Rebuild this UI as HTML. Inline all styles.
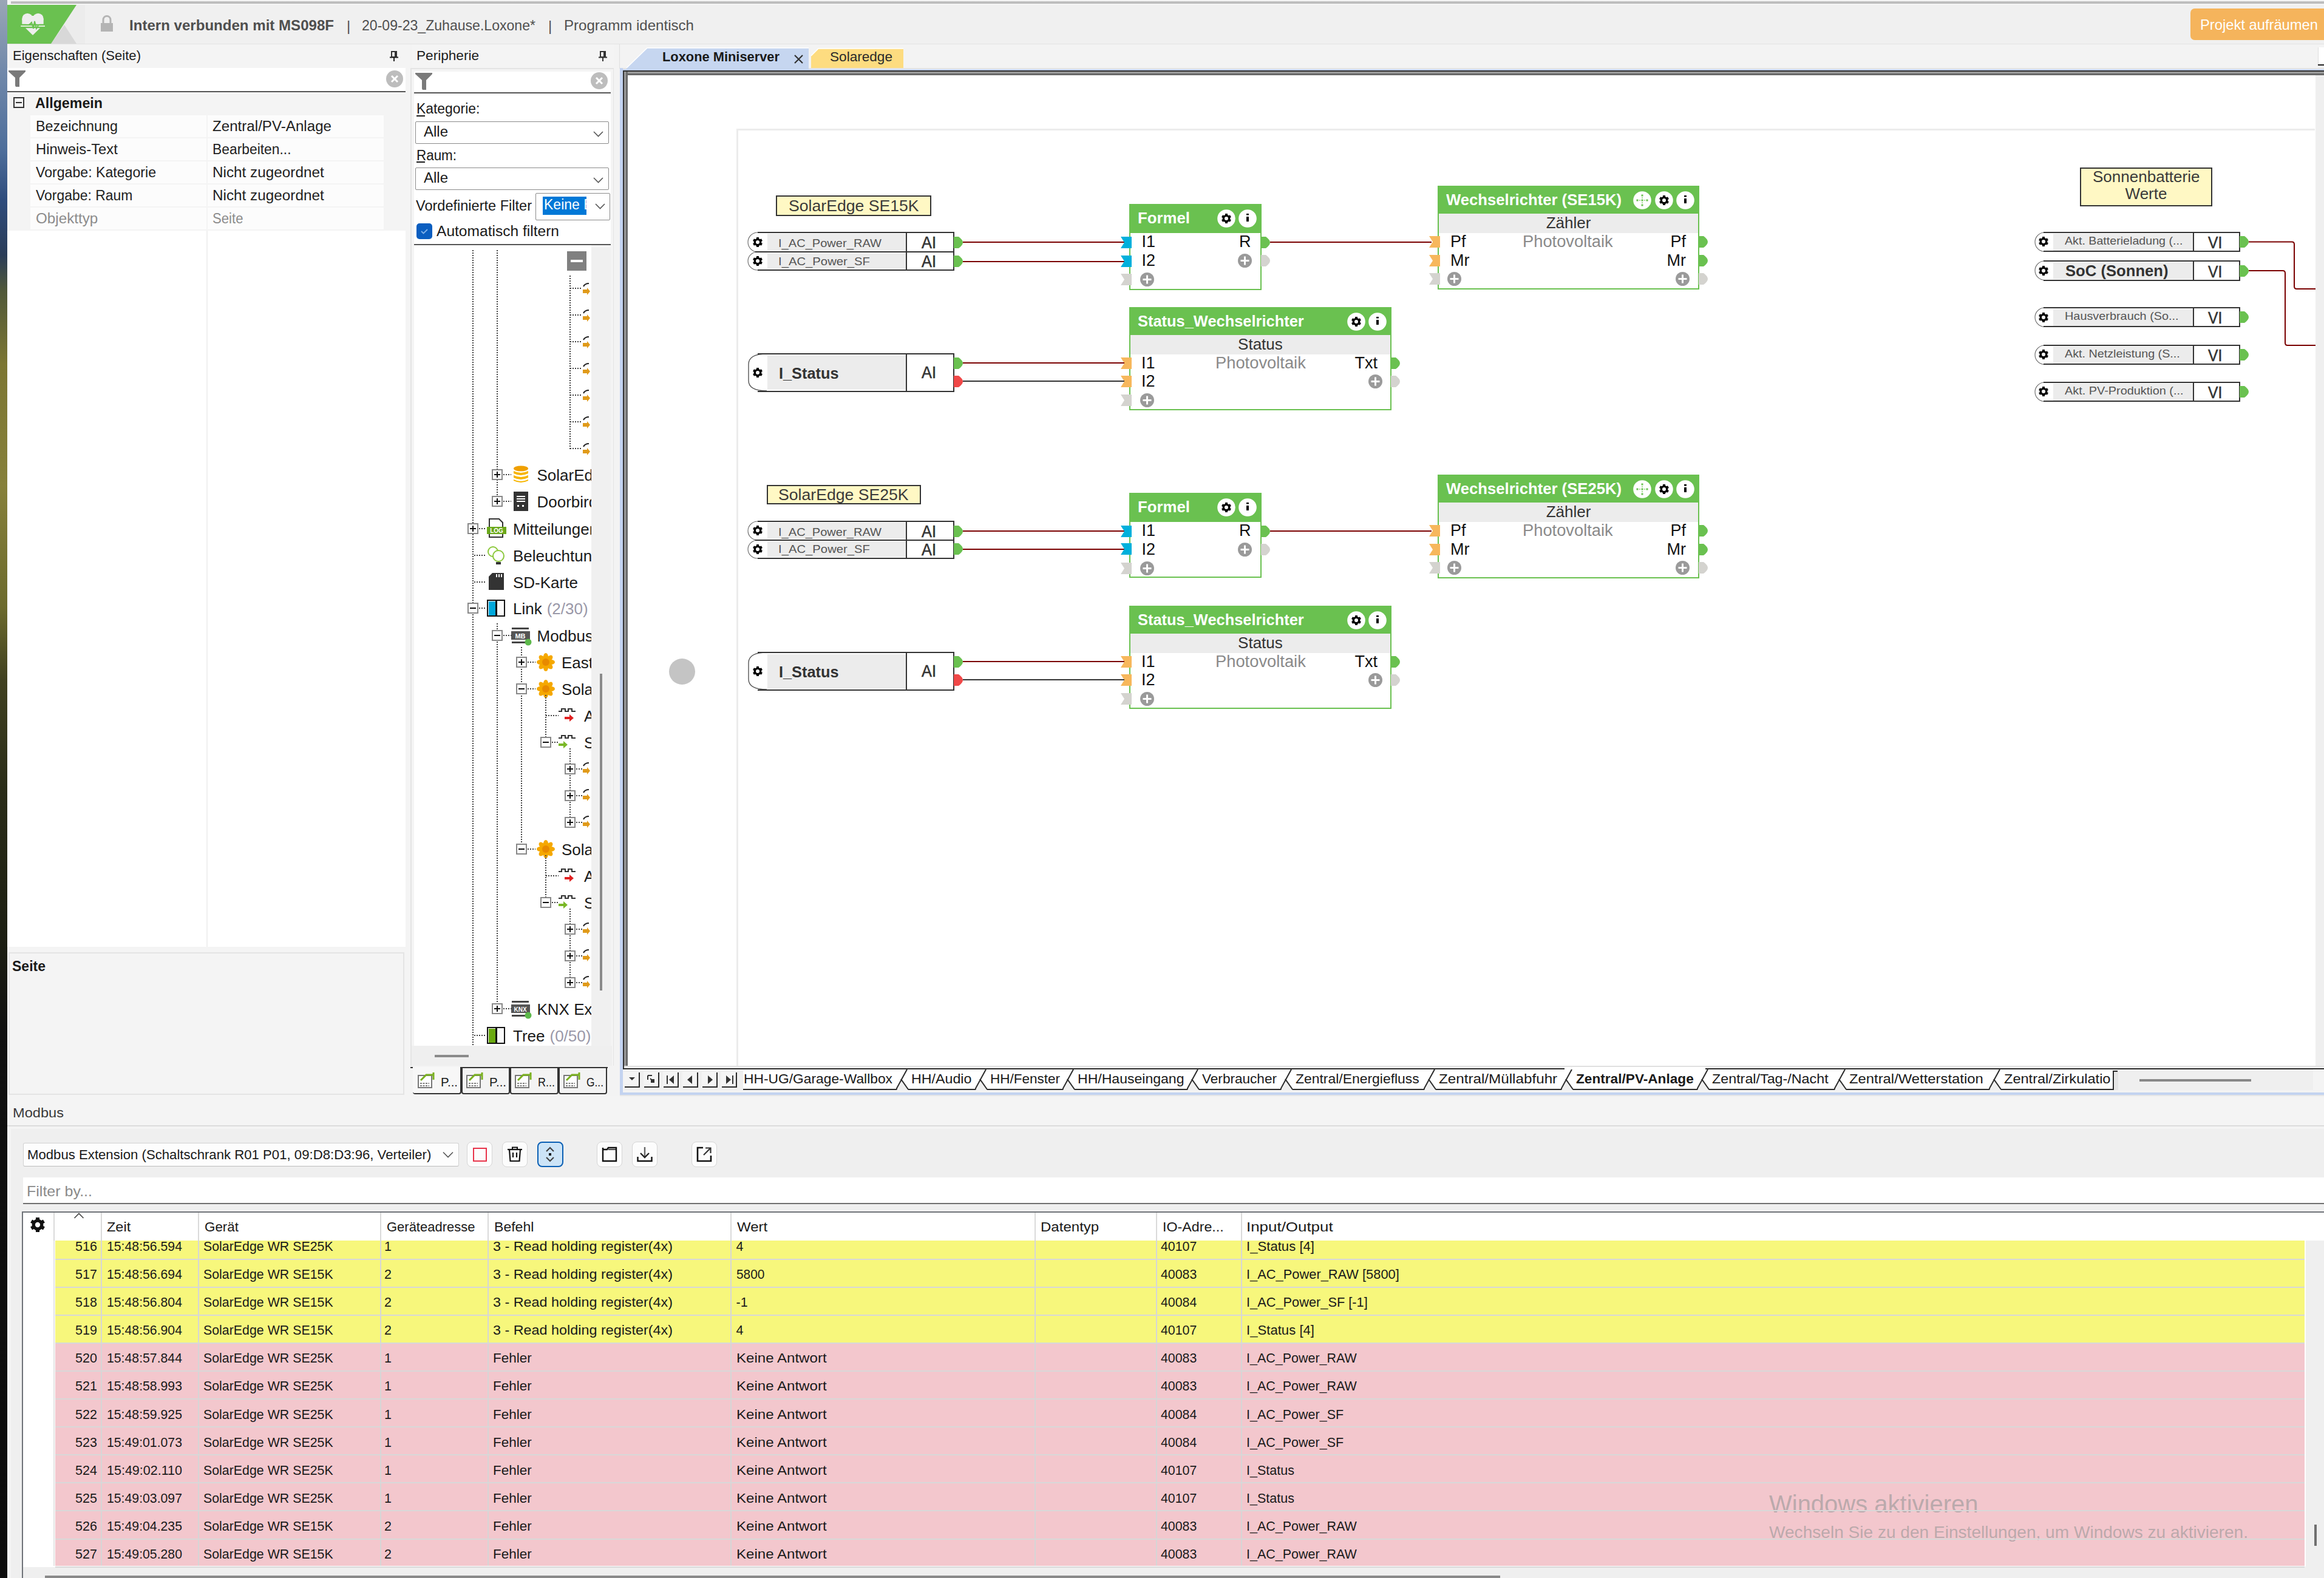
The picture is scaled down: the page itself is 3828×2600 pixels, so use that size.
<!DOCTYPE html><html><head><meta charset="utf-8"><style>
html,body{margin:0;padding:0;}
body{width:3828px;height:2600px;overflow:hidden;background:#f3f3f3;position:relative;font-family:"Liberation Sans",sans-serif;}
div,svg{position:absolute;box-sizing:border-box;}
.t{white-space:pre;}
</style></head><body>
<div style="left:0px;top:0px;width:12px;height:2600px;background:linear-gradient(to bottom,#9aa6b6 0px,#7088aa 120px,#4d6d9a 250px,#2e4c7c 330px,#2a3c58 420px,#505838 480px,#7c7632 600px,#86803a 800px,#6c6a2c 1000px,#404020 1120px,#2a2c18 1300px,#1c1e12 1550px,#101010 1700px,#0c0c0c 2600px);"></div>
<div style="left:12px;top:0px;width:3816px;height:8px;background:#f4f4f4;"></div>
<div style="left:18px;top:2px;width:3810px;height:4px;background:linear-gradient(to bottom,#c8c8c8,#b4b4b4);"></div>
<div style="left:12px;top:8px;width:3816px;height:64px;background:#f0f0f0;"></div>
<div style="left:12px;top:72px;width:3816px;height:1px;background:#e2e2e2;"></div>
<div style="left:12px;top:8px;width:128px;height:64px;background:#ececec;"></div>
<svg style="left:12px;top:8px" width="130" height="64" viewBox="0 0 130 64"><polygon points="72,64 94,33 114,64" fill="#d8d8d8"/><polygon points="0,0 114,0 72,64 0,64" fill="#6ac150"/></svg>
<svg style="left:34px;top:20px" width="42" height="40" viewBox="0 0 42 40"><circle cx="11.2" cy="10.8" r="8.9" fill="#eeeeee"/><circle cx="28.8" cy="10.8" r="8.9" fill="#eeeeee"/><rect x="2.3" y="10.8" width="35.4" height="8.9" fill="#eeeeee"/><rect x="15" y="6" width="10" height="8" fill="#eeeeee"/><rect x="0.2" y="22" width="39.8" height="2" fill="#dcefd4"/><path d="M8 26.2 H32 L20 38 Z" fill="#eeeeee"/><path d="M14 21 L18 17 L21 27 L23 15 L26 27 L29 22" stroke="#6ac150" stroke-width="2" fill="none"/></svg>
<svg style="left:166px;top:25px" width="20" height="28" viewBox="0 0 20 28"><path d="M4 13 V8 C4 3.5 7 1.5 10 1.5 C13 1.5 16 3.5 16 8 V13" stroke="#b4b4b4" stroke-width="3" fill="none"/><rect x="0" y="13" width="20" height="14" fill="#b4b4b4"/></svg>
<div class="t" style="left:213.0px;top:29.7px;font-size:24px;line-height:24px;color:#4f4f4f;font-weight:bold;transform:scaleX(1.0028);transform-origin:0 0;">Intern verbunden mit MS098F</div>
<div class="t" style="left:571.0px;top:30.7px;font-size:24px;line-height:24px;color:#505050;">|</div>
<div class="t" style="left:596.0px;top:29.7px;font-size:24px;line-height:24px;color:#505050;transform:scaleX(0.9611);transform-origin:0 0;">20-09-23_Zuhause.Loxone*</div>
<div class="t" style="left:903.0px;top:30.7px;font-size:24px;line-height:24px;color:#505050;">|</div>
<div class="t" style="left:929.0px;top:29.7px;font-size:24px;line-height:24px;color:#505050;transform:scaleX(1.0027);transform-origin:0 0;">Programm identisch</div>
<div style="left:3608px;top:14px;width:240px;height:52px;background:#f5b45c;border-radius:7px;"></div>
<div class="t" style="left:3624.0px;top:29.2px;font-size:24px;line-height:24px;color:#ffffff;transform:scaleX(0.9893);transform-origin:0 0;">Projekt aufräumen</div>
<div style="left:12px;top:73px;width:664px;height:39px;background:#f4f4f4;"></div>
<div class="t" style="left:20.5px;top:81.4px;font-size:22px;line-height:22px;color:#1e1e1e;transform:scaleX(1.0031);transform-origin:0 0;">Eigenschaften (Seite)</div>
<svg style="left:642px;top:84px" width="15" height="17" viewBox="0 0 15 17"><path d="M3 1 H11 V10 H3 Z" fill="none" stroke="#333" stroke-width="2"/><rect x="8" y="1" width="3" height="9" fill="#333"/><path d="M0 10.5 H14" stroke="#222" stroke-width="2"/><path d="M7 11 V17" stroke="#222" stroke-width="2"/></svg>
<div style="left:12px;top:112px;width:656px;height:40px;background:#ffffff;"></div>
<div style="left:12px;top:150px;width:656px;height:2px;background:#555555;"></div>
<svg style="left:14px;top:116px" width="30" height="30" viewBox="0 0 30 30"><path d="M0 0 H28 V2 L18 12 V27 H12 L11 25 V12 L0 2 Z" fill="#7a7a7a"/></svg>
<svg style="left:636px;top:116px" width="28" height="28" viewBox="0 0 28 28"><circle cx="14" cy="14" r="14" fill="#bdbdbd"/><path d="M9 9 L19 19 M19 9 L9 19" stroke="#fff" stroke-width="3"/></svg>
<div style="left:12px;top:152px;width:656px;height:1408px;background:#ffffff;"></div>
<div style="left:668px;top:112px;width:8px;height:1456px;background:#f4f4f4;"></div>
<div style="left:12px;top:152px;width:656px;height:228px;background:#f4f4f4;"></div>
<div style="left:22px;top:160px;width:18px;height:18px;border:2px solid #333;"></div>
<div style="left:26px;top:168px;width:10px;height:2px;background:#333;"></div>
<div class="t" style="left:58.0px;top:158.5px;font-size:23px;line-height:23px;color:#1a1a1a;font-weight:bold;transform:scaleX(1.0099);transform-origin:0 0;">Allgemein</div>
<div style="left:50px;top:190px;width:290px;height:36px;background:#fcfcfc;"></div>
<div style="left:342px;top:190px;width:290px;height:36px;background:#fcfcfc;"></div>
<div class="t" style="left:59.0px;top:196.5px;font-size:23px;line-height:23px;color:#222222;transform:scaleX(1.0151);transform-origin:0 0;">Bezeichnung</div>
<div class="t" style="left:350.0px;top:196.5px;font-size:23px;line-height:23px;color:#222222;transform:scaleX(1.0500);transform-origin:0 0;">Zentral/PV-Anlage</div>
<div style="left:50px;top:228px;width:290px;height:36px;background:#fcfcfc;"></div>
<div style="left:342px;top:228px;width:290px;height:36px;background:#fcfcfc;"></div>
<div class="t" style="left:59.0px;top:234.5px;font-size:23px;line-height:23px;color:#222222;transform:scaleX(1.0340);transform-origin:0 0;">Hinweis-Text</div>
<div class="t" style="left:350.0px;top:234.5px;font-size:23px;line-height:23px;color:#222222;transform:scaleX(0.9929);transform-origin:0 0;">Bearbeiten...</div>
<div style="left:50px;top:266px;width:290px;height:36px;background:#fcfcfc;"></div>
<div style="left:342px;top:266px;width:290px;height:36px;background:#fcfcfc;"></div>
<div class="t" style="left:59.0px;top:272.5px;font-size:23px;line-height:23px;color:#222222;transform:scaleX(1.0054);transform-origin:0 0;">Vorgabe: Kategorie</div>
<div class="t" style="left:350.0px;top:272.5px;font-size:23px;line-height:23px;color:#222222;transform:scaleX(1.0564);transform-origin:0 0;">Nicht zugeordnet</div>
<div style="left:50px;top:304px;width:290px;height:36px;background:#fcfcfc;"></div>
<div style="left:342px;top:304px;width:290px;height:36px;background:#fcfcfc;"></div>
<div class="t" style="left:59.0px;top:310.5px;font-size:23px;line-height:23px;color:#222222;transform:scaleX(0.9967);transform-origin:0 0;">Vorgabe: Raum</div>
<div class="t" style="left:350.0px;top:310.5px;font-size:23px;line-height:23px;color:#222222;transform:scaleX(1.0564);transform-origin:0 0;">Nicht zugeordnet</div>
<div style="left:50px;top:342px;width:290px;height:36px;background:#fcfcfc;"></div>
<div style="left:342px;top:342px;width:290px;height:36px;background:#fcfcfc;"></div>
<div class="t" style="left:59.0px;top:348.5px;font-size:23px;line-height:23px;color:#8c8c8c;transform:scaleX(1.0530);transform-origin:0 0;">Objekttyp</div>
<div class="t" style="left:350.0px;top:348.5px;font-size:23px;line-height:23px;color:#8c8c8c;transform:scaleX(0.9633);transform-origin:0 0;">Seite</div>
<div style="left:340px;top:380px;width:2px;height:1180px;background:#f0f0f0;"></div>
<div style="left:12px;top:378px;width:656px;height:2px;background:#f4f4f4;"></div>
<div style="left:12px;top:1560px;width:664px;height:250px;background:#f4f4f4;"></div>
<div style="left:14px;top:1569px;width:652px;height:235px;border:2px solid #e4e4e4;background:#f4f4f4;"></div>
<div class="t" style="left:20.0px;top:1580.5px;font-size:23px;line-height:23px;color:#1a1a1a;font-weight:bold;">Seite</div>
<div style="left:676px;top:112px;width:2px;height:1645px;background:#e4e4e4;"></div>
<div style="left:678px;top:73px;width:343px;height:39px;background:#f4f4f4;"></div>
<div class="t" style="left:686.0px;top:80.9px;font-size:22px;line-height:22px;color:#1e1e1e;transform:scaleX(1.0271);transform-origin:0 0;">Peripherie</div>
<svg style="left:986px;top:84px" width="15" height="17" viewBox="0 0 15 17"><path d="M3 1 H11 V10 H3 Z" fill="none" stroke="#333" stroke-width="2"/><rect x="8" y="1" width="3" height="9" fill="#333"/><path d="M0 10.5 H14" stroke="#333" stroke-width="2"/><path d="M7 11 V17" stroke="#333" stroke-width="2"/></svg>
<div style="left:676px;top:112px;width:336px;height:1646px;background:#f4f4f4;"></div>
<div style="left:676px;top:112px;width:2px;height:1646px;background:#e4e4e4;"></div>
<div style="left:1010px;top:112px;width:2px;height:1646px;background:#e4e4e4;"></div>
<div style="left:676px;top:112px;width:336px;height:2px;background:#e4e4e4;"></div>
<div style="left:682px;top:118px;width:324px;height:285px;background:#ffffff;"></div>
<svg style="left:684px;top:120px" width="30" height="30" viewBox="0 0 30 30"><path d="M0 0 H28 V2 L18 12 V28 H12 L11 26 V12 L0 2 Z" fill="#7a7a7a"/></svg>
<svg style="left:973px;top:119px" width="28" height="28" viewBox="0 0 28 28"><circle cx="14" cy="14" r="14" fill="#bdbdbd"/><path d="M9 9 L19 19 M19 9 L9 19" stroke="#fff" stroke-width="3"/></svg>
<div style="left:682px;top:152px;width:324px;height:2px;background:#555;"></div>
<div class="t" style="left:686.0px;top:167.5px;font-size:23px;line-height:23px;color:#1a1a1a;transform:scaleX(0.9957);transform-origin:0 0;">Kategorie:</div>
<div style="left:686px;top:190px;width:14px;height:2px;background:#1a1a1a;"></div>
<div style="left:684px;top:200px;width:319px;height:37px;border:1.5px solid #8a8a8a;border-radius:2px;background:#fff;"></div>
<div class="t" style="left:698.0px;top:205.5px;font-size:23px;line-height:23px;color:#1a1a1a;transform:scaleX(1.0429);transform-origin:0 0;">Alle</div>
<svg style="left:977px;top:216px" width="17" height="10" viewBox="0 0 17 10"><path d="M1 1 L8.5 8.5 L16 1" stroke="#555" stroke-width="1.6" fill="none"/></svg>
<div class="t" style="left:686.0px;top:244.5px;font-size:23px;line-height:23px;color:#1a1a1a;transform:scaleX(0.9743);transform-origin:0 0;">Raum:</div>
<div style="left:686px;top:266px;width:14px;height:2px;background:#1a1a1a;"></div>
<div style="left:684px;top:276px;width:319px;height:37px;border:1.5px solid #8a8a8a;border-radius:2px;background:#fff;"></div>
<div class="t" style="left:698.0px;top:281.5px;font-size:23px;line-height:23px;color:#1a1a1a;transform:scaleX(1.0429);transform-origin:0 0;">Alle</div>
<svg style="left:977px;top:292px" width="17" height="10" viewBox="0 0 17 10"><path d="M1 1 L8.5 8.5 L16 1" stroke="#555" stroke-width="1.6" fill="none"/></svg>
<div class="t" style="left:684.5px;top:328.0px;font-size:23px;line-height:23px;color:#1a1a1a;transform:scaleX(1.0233);transform-origin:0 0;">Vordefinierte Filter</div>
<div style="left:882px;top:318px;width:123px;height:45px;border:1.5px solid #8a8a8a;border-radius:2px;background:#fff;"></div>
<div style="left:894px;top:324px;width:72px;height:30px;background:#0078d7;"></div>
<div style="left:894px;top:320px;width:72px;height:38px;overflow:hidden;"><div class="t" style="left:2px;top:5.5px;font-size:23px;line-height:23px;color:#fff;">Keine B</div></div>
<svg style="left:980px;top:335px" width="17" height="10" viewBox="0 0 17 10"><path d="M1 1 L8.5 8.5 L16 1" stroke="#555" stroke-width="1.6" fill="none"/></svg>
<div style="left:686px;top:368px;width:26px;height:26px;border-radius:5px;background:#0a5ec0;"></div>
<svg style="left:690px;top:372px" width="18" height="18" viewBox="0 0 18 18"><path d="M4 9 L7.5 12.5 L14 6" stroke="#7fb0e8" stroke-width="1.8" fill="none"/></svg>
<div class="t" style="left:719.0px;top:370.0px;font-size:23px;line-height:23px;color:#1a1a1a;transform:scaleX(1.0677);transform-origin:0 0;">Automatisch filtern</div>
<div style="left:682px;top:402px;width:324px;height:2px;background:#555;"></div>
<div style="left:682px;top:404px;width:292px;height:1319px;background:#ffffff;"></div>
<div style="left:974px;top:408px;width:32px;height:1315px;background:#f0f0f0;"></div>
<div style="left:988px;top:1110px;width:4px;height:522px;background:#8a8a8a;"></div>
<div style="left:716px;top:1738px;width:56px;height:4px;background:#8a8a8a;"></div>
<div style="left:778px;top:412px;width:2px;height:1312px;background:repeating-linear-gradient(to bottom,#444 0 2px,transparent 2px 4px);"></div>
<div style="left:818px;top:412px;width:2px;height:368px;background:repeating-linear-gradient(to bottom,#444 0 2px,transparent 2px 4px);"></div>
<div style="left:818px;top:786px;width:2px;height:38px;background:repeating-linear-gradient(to bottom,#444 0 2px,transparent 2px 4px);"></div>
<div style="left:934px;top:414px;width:32px;height:32px;background:#808080;"></div>
<div style="left:940px;top:428px;width:20px;height:4px;background:#fff;"></div>
<div style="left:938px;top:454px;width:2px;height:286px;background:repeating-linear-gradient(to bottom,#444 0 2px,transparent 2px 4px);"></div>
<div style="left:939px;top:474px;width:20px;height:2px;background:repeating-linear-gradient(to right,#444 0 2px,transparent 2px 4px);"></div>
<svg style="left:960px;top:465px" width="14" height="28" viewBox="0 0 14 28"><path d="M1 7 C3 3 6 2 10 2" stroke="#222" stroke-width="2" fill="none"/><path d="M0 12 H7 V9 L12 15 L7 21 V18 H0 Z" fill="#e09a1a"/></svg>
<div style="left:939px;top:518px;width:20px;height:2px;background:repeating-linear-gradient(to right,#444 0 2px,transparent 2px 4px);"></div>
<svg style="left:960px;top:509px" width="14" height="28" viewBox="0 0 14 28"><path d="M1 7 C3 3 6 2 10 2" stroke="#222" stroke-width="2" fill="none"/><path d="M0 12 H7 V9 L12 15 L7 21 V18 H0 Z" fill="#e09a1a"/></svg>
<div style="left:939px;top:562px;width:20px;height:2px;background:repeating-linear-gradient(to right,#444 0 2px,transparent 2px 4px);"></div>
<svg style="left:960px;top:553px" width="14" height="28" viewBox="0 0 14 28"><path d="M1 7 C3 3 6 2 10 2" stroke="#222" stroke-width="2" fill="none"/><path d="M0 12 H7 V9 L12 15 L7 21 V18 H0 Z" fill="#e09a1a"/></svg>
<div style="left:939px;top:606px;width:20px;height:2px;background:repeating-linear-gradient(to right,#444 0 2px,transparent 2px 4px);"></div>
<svg style="left:960px;top:597px" width="14" height="28" viewBox="0 0 14 28"><path d="M1 7 C3 3 6 2 10 2" stroke="#222" stroke-width="2" fill="none"/><path d="M0 12 H7 V9 L12 15 L7 21 V18 H0 Z" fill="#e09a1a"/></svg>
<div style="left:939px;top:650px;width:20px;height:2px;background:repeating-linear-gradient(to right,#444 0 2px,transparent 2px 4px);"></div>
<svg style="left:960px;top:641px" width="14" height="28" viewBox="0 0 14 28"><path d="M1 7 C3 3 6 2 10 2" stroke="#222" stroke-width="2" fill="none"/><path d="M0 12 H7 V9 L12 15 L7 21 V18 H0 Z" fill="#e09a1a"/></svg>
<div style="left:939px;top:694px;width:20px;height:2px;background:repeating-linear-gradient(to right,#444 0 2px,transparent 2px 4px);"></div>
<svg style="left:960px;top:685px" width="14" height="28" viewBox="0 0 14 28"><path d="M1 7 C3 3 6 2 10 2" stroke="#222" stroke-width="2" fill="none"/><path d="M0 12 H7 V9 L12 15 L7 21 V18 H0 Z" fill="#e09a1a"/></svg>
<div style="left:939px;top:738px;width:20px;height:2px;background:repeating-linear-gradient(to right,#444 0 2px,transparent 2px 4px);"></div>
<svg style="left:960px;top:729px" width="14" height="28" viewBox="0 0 14 28"><path d="M1 7 C3 3 6 2 10 2" stroke="#222" stroke-width="2" fill="none"/><path d="M0 12 H7 V9 L12 15 L7 21 V18 H0 Z" fill="#e09a1a"/></svg>
<div style="left:679px;top:404px;width:295px;height:1319px;overflow:hidden;">
</div>
<div style="left:810px;top:773px;width:18px;height:18px;border:2px solid #888;background:#fff;"></div>
<div style="left:814px;top:781px;width:10px;height:2px;background:#111;"></div>
<div style="left:818px;top:777px;width:2px;height:10px;background:#111;"></div>
<div style="left:829px;top:781px;width:13px;height:2px;background:repeating-linear-gradient(to right,#444 0 2px,transparent 2px 4px);"></div>
<svg style="left:845px;top:767px" width="26" height="29" viewBox="0 0 26 29"><ellipse cx="13" cy="5" rx="12" ry="4.5" fill="#f0a000"/><path d="M1 9 Q13 15 25 9 V13 Q13 19 1 13 Z" fill="#f7b500"/><path d="M1 16 Q13 22 25 16 V20 Q13 26 1 20 Z" fill="#f7b500"/><path d="M1 23 Q13 29 25 23 V25 Q13 31 1 25 Z" fill="#f7b500"/></svg>
<div style="left:810px;top:817px;width:18px;height:18px;border:2px solid #888;background:#fff;"></div>
<div style="left:814px;top:825px;width:10px;height:2px;background:#111;"></div>
<div style="left:818px;top:821px;width:2px;height:10px;background:#111;"></div>
<div style="left:829px;top:825px;width:13px;height:2px;background:repeating-linear-gradient(to right,#444 0 2px,transparent 2px 4px);"></div>
<div style="left:846px;top:810px;width:24px;height:32px;background:#333;"></div>
<div style="left:851px;top:817px;width:14px;height:2px;background:#fff;"></div>
<div style="left:851px;top:821px;width:14px;height:2px;background:#fff;"></div>
<div style="left:851px;top:825px;width:14px;height:2px;background:#fff;"></div>
<div style="left:852px;top:832px;width:3px;height:3px;background:#fff;"></div>
<div style="left:860px;top:832px;width:3px;height:3px;background:#fff;"></div>
<div style="left:770px;top:862px;width:18px;height:18px;border:2px solid #888;background:#fff;"></div>
<div style="left:774px;top:870px;width:10px;height:2px;background:#111;"></div>
<div style="left:778px;top:866px;width:2px;height:10px;background:#111;"></div>
<div style="left:789px;top:870px;width:11px;height:2px;background:repeating-linear-gradient(to right,#444 0 2px,transparent 2px 4px);"></div>
<svg style="left:802px;top:854px" width="32" height="32" viewBox="0 0 32 32"><path d="M4 1 H20 L26 7 V31 H4 Z" fill="#fff" stroke="#333" stroke-width="2"/><rect x="0" y="14" width="32" height="12" fill="#6aa81a"/><text x="16" y="24" font-size="10" font-weight="bold" fill="#fff" text-anchor="middle" font-family="Liberation Sans">LOG</text></svg>
<div style="left:781px;top:914px;width:19px;height:2px;background:repeating-linear-gradient(to right,#444 0 2px,transparent 2px 4px);"></div>
<svg style="left:802px;top:899px" width="32" height="32" viewBox="0 0 32 32"><circle cx="10" cy="10" r="8" fill="none" stroke="#8cc83c" stroke-width="2"/><circle cx="19" cy="17" r="9" fill="#fff" stroke="#8cc83c" stroke-width="2"/><rect x="15" y="27" width="8" height="4" fill="#333"/></svg>
<div style="left:781px;top:958px;width:19px;height:2px;background:repeating-linear-gradient(to right,#444 0 2px,transparent 2px 4px);"></div>
<svg style="left:805px;top:944px" width="25" height="28" viewBox="0 0 25 28"><path d="M6 0 H25 V28 H0 V6 Z" fill="#333"/><rect x="12" y="2" width="2" height="5" fill="#fff"/><rect x="16" y="2" width="2" height="5" fill="#fff"/><rect x="20" y="2" width="2" height="5" fill="#fff"/></svg>
<div style="left:770px;top:993px;width:18px;height:18px;border:2px solid #888;background:#fff;"></div>
<div style="left:774px;top:1001px;width:10px;height:2px;background:#111;"></div>
<div style="left:789px;top:1001px;width:11px;height:2px;background:repeating-linear-gradient(to right,#444 0 2px,transparent 2px 4px);"></div>
<div style="left:802px;top:988px;width:30px;height:28px;border:2.5px solid #111;background:#fafafa;"></div>
<div style="left:804.5px;top:990.5px;width:12px;height:23px;background:#00a8dc;"></div>
<div style="left:816px;top:990px;width:2.5px;height:24px;background:#111;"></div>
<div style="left:818px;top:1027px;width:2px;height:10px;background:repeating-linear-gradient(to bottom,#444 0 2px,transparent 2px 4px);"></div>
<div style="left:810px;top:1038px;width:18px;height:18px;border:2px solid #888;background:#fff;"></div>
<div style="left:814px;top:1046px;width:10px;height:2px;background:#111;"></div>
<div style="left:829px;top:1046px;width:13px;height:2px;background:repeating-linear-gradient(to right,#444 0 2px,transparent 2px 4px);"></div>
<svg style="left:842px;top:1034px" width="34" height="30" viewBox="0 0 34 30"><rect x="1" y="0" width="28" height="3" fill="#444"/><rect x="0" y="6" width="31" height="14" fill="#555"/><text x="15" y="18" font-size="11" font-weight="bold" fill="#fff" text-anchor="middle" font-family="Liberation Sans">MB</text><rect x="1" y="23" width="22" height="3" fill="#444"/><circle cx="28" cy="24" r="5.5" fill="#5cb84a"/></svg>
<div style="left:818px;top:1057px;width:2px;height:605px;background:repeating-linear-gradient(to bottom,#444 0 2px,transparent 2px 4px);"></div>
<div style="left:858px;top:1066px;width:2px;height:332px;background:repeating-linear-gradient(to bottom,#444 0 2px,transparent 2px 4px);"></div>
<div style="left:850px;top:1082px;width:18px;height:18px;border:2px solid #888;background:#fff;"></div>
<div style="left:854px;top:1090px;width:10px;height:2px;background:#111;"></div>
<div style="left:858px;top:1086px;width:2px;height:10px;background:#111;"></div>
<div style="left:869px;top:1090px;width:13px;height:2px;background:repeating-linear-gradient(to right,#444 0 2px,transparent 2px 4px);"></div>
<svg style="left:884px;top:1076px" width="30" height="30" viewBox="0 0 30 30"><g fill="#f5a800"><ellipse cx="15" cy="6" rx="4" ry="6" transform="rotate(0 15 15)"/><ellipse cx="15" cy="6" rx="4" ry="6" transform="rotate(45 15 15)"/><ellipse cx="15" cy="6" rx="4" ry="6" transform="rotate(90 15 15)"/><ellipse cx="15" cy="6" rx="4" ry="6" transform="rotate(135 15 15)"/><ellipse cx="15" cy="6" rx="4" ry="6" transform="rotate(180 15 15)"/><ellipse cx="15" cy="6" rx="4" ry="6" transform="rotate(225 15 15)"/><ellipse cx="15" cy="6" rx="4" ry="6" transform="rotate(270 15 15)"/><ellipse cx="15" cy="6" rx="4" ry="6" transform="rotate(315 15 15)"/></g><circle cx="15" cy="15" r="6" fill="#e88a00"/></svg>
<div style="left:850px;top:1126px;width:18px;height:18px;border:2px solid #888;background:#fff;"></div>
<div style="left:854px;top:1134px;width:10px;height:2px;background:#111;"></div>
<div style="left:869px;top:1134px;width:13px;height:2px;background:repeating-linear-gradient(to right,#444 0 2px,transparent 2px 4px);"></div>
<svg style="left:884px;top:1120px" width="30" height="30" viewBox="0 0 30 30"><g fill="#f5a800"><ellipse cx="15" cy="6" rx="4" ry="6" transform="rotate(0 15 15)"/><ellipse cx="15" cy="6" rx="4" ry="6" transform="rotate(45 15 15)"/><ellipse cx="15" cy="6" rx="4" ry="6" transform="rotate(90 15 15)"/><ellipse cx="15" cy="6" rx="4" ry="6" transform="rotate(135 15 15)"/><ellipse cx="15" cy="6" rx="4" ry="6" transform="rotate(180 15 15)"/><ellipse cx="15" cy="6" rx="4" ry="6" transform="rotate(225 15 15)"/><ellipse cx="15" cy="6" rx="4" ry="6" transform="rotate(270 15 15)"/><ellipse cx="15" cy="6" rx="4" ry="6" transform="rotate(315 15 15)"/></g><circle cx="15" cy="15" r="6" fill="#e88a00"/></svg>
<div style="left:850px;top:1390px;width:18px;height:18px;border:2px solid #888;background:#fff;"></div>
<div style="left:854px;top:1398px;width:10px;height:2px;background:#111;"></div>
<div style="left:869px;top:1398px;width:13px;height:2px;background:repeating-linear-gradient(to right,#444 0 2px,transparent 2px 4px);"></div>
<svg style="left:884px;top:1384px" width="30" height="30" viewBox="0 0 30 30"><g fill="#f5a800"><ellipse cx="15" cy="6" rx="4" ry="6" transform="rotate(0 15 15)"/><ellipse cx="15" cy="6" rx="4" ry="6" transform="rotate(45 15 15)"/><ellipse cx="15" cy="6" rx="4" ry="6" transform="rotate(90 15 15)"/><ellipse cx="15" cy="6" rx="4" ry="6" transform="rotate(135 15 15)"/><ellipse cx="15" cy="6" rx="4" ry="6" transform="rotate(180 15 15)"/><ellipse cx="15" cy="6" rx="4" ry="6" transform="rotate(225 15 15)"/><ellipse cx="15" cy="6" rx="4" ry="6" transform="rotate(270 15 15)"/><ellipse cx="15" cy="6" rx="4" ry="6" transform="rotate(315 15 15)"/></g><circle cx="15" cy="15" r="6" fill="#e88a00"/></svg>
<div style="left:898px;top:1145px;width:2px;height:78px;background:repeating-linear-gradient(to bottom,#444 0 2px,transparent 2px 4px);"></div>
<div style="left:899px;top:1178px;width:21px;height:2px;background:repeating-linear-gradient(to right,#444 0 2px,transparent 2px 4px);"></div>
<svg style="left:920px;top:1167px" width="32" height="24" viewBox="0 0 32 24"><path d="M0 5 H5 V1 H11 V5 H16 V1 H22 V5 H28" stroke="#333" stroke-width="2" fill="none"/><path d="M10 14 H18 V10 L25 16 L18 22 V18 H10 Z" fill="#e02020"/></svg>
<div style="left:890px;top:1214px;width:18px;height:18px;border:2px solid #888;background:#fff;"></div>
<div style="left:894px;top:1222px;width:10px;height:2px;background:#111;"></div>
<div style="left:909px;top:1222px;width:11px;height:2px;background:repeating-linear-gradient(to right,#444 0 2px,transparent 2px 4px);"></div>
<svg style="left:920px;top:1211px" width="32" height="24" viewBox="0 0 32 24"><path d="M0 5 H5 V1 H11 V5 H16 V1 H22 V5 H28" stroke="#333" stroke-width="2" fill="none"/><path d="M0 14 H8 V10 L15 16 L8 22 V18 H0 Z" fill="#7ab828"/></svg>
<div style="left:938px;top:1233px;width:2px;height:122px;background:repeating-linear-gradient(to bottom,#444 0 2px,transparent 2px 4px);"></div>
<div style="left:930px;top:1258px;width:18px;height:18px;border:2px solid #888;background:#fff;"></div>
<div style="left:934px;top:1266px;width:10px;height:2px;background:#111;"></div>
<div style="left:938px;top:1262px;width:2px;height:10px;background:#111;"></div>
<div style="left:949px;top:1266px;width:11px;height:2px;background:repeating-linear-gradient(to right,#444 0 2px,transparent 2px 4px);"></div>
<svg style="left:960px;top:1255px" width="14" height="28" viewBox="0 0 14 28"><path d="M1 7 C3 3 6 2 10 2" stroke="#222" stroke-width="2" fill="none"/><path d="M0 12 H7 V9 L12 15 L7 21 V18 H0 Z" fill="#e09a1a"/></svg>
<div style="left:930px;top:1302px;width:18px;height:18px;border:2px solid #888;background:#fff;"></div>
<div style="left:934px;top:1310px;width:10px;height:2px;background:#111;"></div>
<div style="left:938px;top:1306px;width:2px;height:10px;background:#111;"></div>
<div style="left:949px;top:1310px;width:11px;height:2px;background:repeating-linear-gradient(to right,#444 0 2px,transparent 2px 4px);"></div>
<svg style="left:960px;top:1299px" width="14" height="28" viewBox="0 0 14 28"><path d="M1 7 C3 3 6 2 10 2" stroke="#222" stroke-width="2" fill="none"/><path d="M0 12 H7 V9 L12 15 L7 21 V18 H0 Z" fill="#e09a1a"/></svg>
<div style="left:930px;top:1346px;width:18px;height:18px;border:2px solid #888;background:#fff;"></div>
<div style="left:934px;top:1354px;width:10px;height:2px;background:#111;"></div>
<div style="left:938px;top:1350px;width:2px;height:10px;background:#111;"></div>
<div style="left:949px;top:1354px;width:11px;height:2px;background:repeating-linear-gradient(to right,#444 0 2px,transparent 2px 4px);"></div>
<svg style="left:960px;top:1343px" width="14" height="28" viewBox="0 0 14 28"><path d="M1 7 C3 3 6 2 10 2" stroke="#222" stroke-width="2" fill="none"/><path d="M0 12 H7 V9 L12 15 L7 21 V18 H0 Z" fill="#e09a1a"/></svg>
<div style="left:898px;top:1409px;width:2px;height:78px;background:repeating-linear-gradient(to bottom,#444 0 2px,transparent 2px 4px);"></div>
<div style="left:899px;top:1442px;width:21px;height:2px;background:repeating-linear-gradient(to right,#444 0 2px,transparent 2px 4px);"></div>
<svg style="left:920px;top:1431px" width="32" height="24" viewBox="0 0 32 24"><path d="M0 5 H5 V1 H11 V5 H16 V1 H22 V5 H28" stroke="#333" stroke-width="2" fill="none"/><path d="M10 14 H18 V10 L25 16 L18 22 V18 H10 Z" fill="#e02020"/></svg>
<div style="left:890px;top:1478px;width:18px;height:18px;border:2px solid #888;background:#fff;"></div>
<div style="left:894px;top:1486px;width:10px;height:2px;background:#111;"></div>
<div style="left:909px;top:1486px;width:11px;height:2px;background:repeating-linear-gradient(to right,#444 0 2px,transparent 2px 4px);"></div>
<svg style="left:920px;top:1475px" width="32" height="24" viewBox="0 0 32 24"><path d="M0 5 H5 V1 H11 V5 H16 V1 H22 V5 H28" stroke="#333" stroke-width="2" fill="none"/><path d="M0 14 H8 V10 L15 16 L8 22 V18 H0 Z" fill="#7ab828"/></svg>
<div style="left:938px;top:1497px;width:2px;height:122px;background:repeating-linear-gradient(to bottom,#444 0 2px,transparent 2px 4px);"></div>
<div style="left:930px;top:1522px;width:18px;height:18px;border:2px solid #888;background:#fff;"></div>
<div style="left:934px;top:1530px;width:10px;height:2px;background:#111;"></div>
<div style="left:938px;top:1526px;width:2px;height:10px;background:#111;"></div>
<div style="left:949px;top:1530px;width:11px;height:2px;background:repeating-linear-gradient(to right,#444 0 2px,transparent 2px 4px);"></div>
<svg style="left:960px;top:1519px" width="14" height="28" viewBox="0 0 14 28"><path d="M1 7 C3 3 6 2 10 2" stroke="#222" stroke-width="2" fill="none"/><path d="M0 12 H7 V9 L12 15 L7 21 V18 H0 Z" fill="#e09a1a"/></svg>
<div style="left:930px;top:1566px;width:18px;height:18px;border:2px solid #888;background:#fff;"></div>
<div style="left:934px;top:1574px;width:10px;height:2px;background:#111;"></div>
<div style="left:938px;top:1570px;width:2px;height:10px;background:#111;"></div>
<div style="left:949px;top:1574px;width:11px;height:2px;background:repeating-linear-gradient(to right,#444 0 2px,transparent 2px 4px);"></div>
<svg style="left:960px;top:1563px" width="14" height="28" viewBox="0 0 14 28"><path d="M1 7 C3 3 6 2 10 2" stroke="#222" stroke-width="2" fill="none"/><path d="M0 12 H7 V9 L12 15 L7 21 V18 H0 Z" fill="#e09a1a"/></svg>
<div style="left:930px;top:1610px;width:18px;height:18px;border:2px solid #888;background:#fff;"></div>
<div style="left:934px;top:1618px;width:10px;height:2px;background:#111;"></div>
<div style="left:938px;top:1614px;width:2px;height:10px;background:#111;"></div>
<div style="left:949px;top:1618px;width:11px;height:2px;background:repeating-linear-gradient(to right,#444 0 2px,transparent 2px 4px);"></div>
<svg style="left:960px;top:1607px" width="14" height="28" viewBox="0 0 14 28"><path d="M1 7 C3 3 6 2 10 2" stroke="#222" stroke-width="2" fill="none"/><path d="M0 12 H7 V9 L12 15 L7 21 V18 H0 Z" fill="#e09a1a"/></svg>
<div style="left:810px;top:1653px;width:18px;height:18px;border:2px solid #888;background:#fff;"></div>
<div style="left:814px;top:1661px;width:10px;height:2px;background:#111;"></div>
<div style="left:818px;top:1657px;width:2px;height:10px;background:#111;"></div>
<div style="left:829px;top:1661px;width:13px;height:2px;background:repeating-linear-gradient(to right,#444 0 2px,transparent 2px 4px);"></div>
<svg style="left:842px;top:1649px" width="34" height="30" viewBox="0 0 34 30"><rect x="1" y="0" width="28" height="3" fill="#444"/><rect x="0" y="6" width="31" height="14" fill="#555"/><text x="15" y="18" font-size="10" font-weight="bold" fill="#fff" text-anchor="middle" font-family="Liberation Sans">KNX</text><rect x="1" y="23" width="22" height="3" fill="#444"/><circle cx="28" cy="24" r="5.5" fill="#5cb84a"/></svg>
<div style="left:781px;top:1705px;width:19px;height:2px;background:repeating-linear-gradient(to right,#444 0 2px,transparent 2px 4px);"></div>
<div style="left:802px;top:1692px;width:30px;height:28px;border:2.5px solid #111;background:#fafafa;"></div>
<div style="left:804.5px;top:1694.5px;width:12px;height:23px;background:#6aaa10;"></div>
<div style="left:816px;top:1694px;width:2.5px;height:24px;background:#111;"></div>
<div style="left:679px;top:404px;width:295px;height:1319px;overflow:hidden;">
<div class="t" style="left:205.5px;top:365.5px;font-size:26px;line-height:26px;color:#1a1a1a;">SolarEdge</div>
<div class="t" style="left:205.5px;top:409.5px;font-size:26px;line-height:26px;color:#1a1a1a;">Doorbird</div>
<div class="t" style="left:166px;top:454.5px;font-size:26px;line-height:26px;color:#1a1a1a;">Mitteilungen</div>
<div class="t" style="left:166px;top:498.5px;font-size:26px;line-height:26px;color:#1a1a1a;">Beleuchtung</div>
<div class="t" style="left:166px;top:542.5px;font-size:26px;line-height:26px;color:#1a1a1a;">SD-Karte</div>
<div class="t" style="left:166px;top:585.5px;font-size:26px;line-height:26px;color:#1a1a1a;">Link</div>
<div class="t" style="left:221.7px;top:585.5px;font-size:26px;line-height:26px;color:#9a98a8;">(2/30)</div>
<div class="t" style="left:205.5px;top:630.5px;font-size:26px;line-height:26px;color:#1a1a1a;">Modbus</div>
<div class="t" style="left:246px;top:674.5px;font-size:26px;line-height:26px;color:#1a1a1a;">East</div>
<div class="t" style="left:246px;top:718.5px;font-size:26px;line-height:26px;color:#1a1a1a;">Solar</div>
<div class="t" style="left:283px;top:762.5px;font-size:26px;line-height:26px;color:#1a1a1a;">A</div>
<div class="t" style="left:283px;top:806.5px;font-size:26px;line-height:26px;color:#1a1a1a;">S</div>
<div class="t" style="left:246px;top:982.5px;font-size:26px;line-height:26px;color:#1a1a1a;">Solar</div>
<div class="t" style="left:283px;top:1026.5px;font-size:26px;line-height:26px;color:#1a1a1a;">A</div>
<div class="t" style="left:283px;top:1070.5px;font-size:26px;line-height:26px;color:#1a1a1a;">S</div>
<div class="t" style="left:205.5px;top:1245.5px;font-size:26px;line-height:26px;color:#1a1a1a;">KNX Ex</div>
<div class="t" style="left:166px;top:1289.5px;font-size:26px;line-height:26px;color:#1a1a1a;">Tree</div>
<div class="t" style="left:226.5px;top:1289.5px;font-size:26px;line-height:26px;color:#9a98a8;">(0/50)</div>
</div>
<div style="left:678px;top:1723px;width:330px;height:34px;background:#efefef;"></div>
<div style="left:716px;top:1738px;width:56px;height:4px;background:#8a8a8a;"></div>
<div style="left:676px;top:1756px;width:336px;height:50px;background:#f3f3f3;"></div>
<div style="left:676px;top:1758px;width:325px;height:2px;background:#333;"></div>
<div style="left:680px;top:1758px;width:80px;height:45px;background:#f7f7f7;border-bottom:2px solid #333;border-right:2px solid #333;border-radius:0 0 4px 4px;"></div>
<svg style="left:688px;top:1766px" width="34" height="28" viewBox="0 0 34 28"><rect x="1" y="6" width="22" height="20" fill="#fff" stroke="#777" stroke-width="2"/><path d="M4 19 H19 M4 23 H19" stroke="#555" stroke-width="1.6" stroke-dasharray="3 1.5"/><path d="M5 14 L14 5 H27" stroke="#7ab020" stroke-width="3" fill="none"/><path d="M26 1 V13" stroke="#7ab020" stroke-width="3"/></svg>
<div class="t" style="left:725.5px;top:1771.7px;font-size:21px;line-height:21px;color:#1a1a1a;transform:scaleX(0.9721);transform-origin:0 0;">P...</div>
<div style="left:760px;top:1758px;width:80px;height:45px;background:#f3f3f3;border:2px solid #333;border-radius:0 0 4px 4px;"></div>
<svg style="left:768px;top:1766px" width="34" height="28" viewBox="0 0 34 28"><rect x="1" y="6" width="22" height="20" fill="#fff" stroke="#777" stroke-width="2"/><path d="M4 19 H19 M4 23 H19" stroke="#555" stroke-width="1.6" stroke-dasharray="3 1.5"/><path d="M5 14 L14 5 H27" stroke="#7ab020" stroke-width="3" fill="none"/><path d="M26 1 V13" stroke="#7ab020" stroke-width="3"/></svg>
<div class="t" style="left:805.5px;top:1771.7px;font-size:21px;line-height:21px;color:#1a1a1a;transform:scaleX(0.9721);transform-origin:0 0;">P...</div>
<div style="left:840px;top:1758px;width:80px;height:45px;background:#f3f3f3;border:2px solid #333;border-radius:0 0 4px 4px;"></div>
<svg style="left:848px;top:1766px" width="34" height="28" viewBox="0 0 34 28"><rect x="1" y="6" width="22" height="20" fill="#fff" stroke="#777" stroke-width="2"/><path d="M4 19 H19 M4 23 H19" stroke="#555" stroke-width="1.6" stroke-dasharray="3 1.5"/><path d="M5 14 L14 5 H27" stroke="#7ab020" stroke-width="3" fill="none"/><path d="M26 1 V13" stroke="#7ab020" stroke-width="3"/></svg>
<div class="t" style="left:885.5px;top:1771.7px;font-size:21px;line-height:21px;color:#1a1a1a;transform:scaleX(0.8571);transform-origin:0 0;">R...</div>
<div style="left:920px;top:1758px;width:80px;height:45px;background:#f3f3f3;border:2px solid #333;border-radius:0 0 4px 4px;"></div>
<svg style="left:928px;top:1766px" width="34" height="28" viewBox="0 0 34 28"><rect x="1" y="6" width="22" height="20" fill="#fff" stroke="#777" stroke-width="2"/><path d="M4 19 H19 M4 23 H19" stroke="#555" stroke-width="1.6" stroke-dasharray="3 1.5"/><path d="M5 14 L14 5 H27" stroke="#7ab020" stroke-width="3" fill="none"/><path d="M26 1 V13" stroke="#7ab020" stroke-width="3"/></svg>
<div class="t" style="left:965.5px;top:1771.7px;font-size:21px;line-height:21px;color:#1a1a1a;transform:scaleX(0.8275);transform-origin:0 0;">G...</div>
<div style="left:1021px;top:73px;width:2807px;height:40px;background:#f3f3f3;"></div>
<div style="left:1011px;top:73px;width:10px;height:1733px;background:#f3f3f3;"></div>
<svg style="left:1021px;top:73px" width="480" height="44" viewBox="0 0 480 44"><path d="M11 39 L45 6 H311 V39 Z" fill="#c6d6f0"/><path d="M11 39 L45 6 H311" stroke="#ffffff" stroke-width="1.5" fill="none"/><path d="M315 39 V19 L327 7 H467 V39 Z" fill="#fddc80"/><path d="M315 19 L327 7 H467" stroke="#ffffff" stroke-width="1.5" fill="none"/></svg>
<div class="t" style="left:1091.0px;top:83.4px;font-size:22px;line-height:22px;color:#1a1a1a;font-weight:bold;transform:scaleX(0.9928);transform-origin:0 0;">Loxone Miniserver</div>
<svg style="left:1308px;top:90px" width="15" height="15" viewBox="0 0 15 15"><path d="M1 1 L14 14 M14 1 L1 14" stroke="#333" stroke-width="2.2"/></svg>
<div class="t" style="left:1367.0px;top:83.4px;font-size:22px;line-height:22px;color:#2a2a2a;transform:scaleX(1.0269);transform-origin:0 0;">Solaredge</div>
<div style="left:3818px;top:78px;width:10px;height:30px;background:#fff;border-left:1px solid #ddd;"></div>
<div style="left:3818px;top:106px;width:10px;height:2px;background:#222;"></div>
<div style="left:1021px;top:112px;width:2807px;height:2px;background:#e6e6e6;"></div>
<div style="left:1021px;top:114px;width:2807px;height:2px;background:#c3d3f0;"></div>
<div style="left:1032px;top:112px;width:300px;height:2px;background:#c6d6f0;"></div>
<div style="left:1020px;top:73px;width:1px;height:40px;background:#e0e0e0;"></div>
<div style="left:1021px;top:112px;width:5px;height:1692px;background:#c3d3f0;"></div>
<div style="left:1021px;top:1800px;width:2807px;height:4px;background:#c3d3f0;"></div>
<div style="left:1021px;top:1804px;width:2807px;height:2px;background:#e6e6e6;"></div>
<div style="left:1026px;top:116px;width:2802px;height:2px;background:#333;"></div>
<div style="left:1026px;top:116px;width:2px;height:1646px;background:#333;"></div>
<div style="left:1028px;top:118px;width:2800px;height:6px;background:linear-gradient(to bottom,#9a9a9a 0,#9a9a9a 45%,#6a6a6a 55%,#6a6a6a 100%);"></div>
<div style="left:1028px;top:118px;width:6px;height:1638px;background:linear-gradient(to right,#9a9a9a 0,#9a9a9a 45%,#6a6a6a 55%,#6a6a6a 100%);"></div>
<div style="left:1034px;top:124px;width:2780px;height:1632px;background:#ffffff;"></div>
<div style="left:3814px;top:124px;width:14px;height:1632px;background:#efefef;"></div>
<div style="left:1028px;top:1756px;width:2800px;height:2px;background:#e0e0e0;"></div>
<div style="left:1028px;top:1758px;width:2800px;height:2px;background:#ffffff;"></div>
<div style="left:1026px;top:1760px;width:2802px;height:2px;background:#2a2a2a;"></div>
<div style="left:1028px;top:1762px;width:2800px;height:2px;background:#ffffff;"></div>
<div style="left:1028px;top:1764px;width:2782px;height:32px;background:#efefef;"></div>
<div style="left:3810px;top:1764px;width:18px;height:36px;background:#f4f4f4;"></div>
<div style="left:1028px;top:1796px;width:2800px;height:4px;background:#f3f3f3;"></div>
<div style="left:1213px;top:212px;width:3px;height:1544px;background:#ececec;"></div>
<div style="left:1213px;top:212px;width:2600px;height:3px;background:#ececec;"></div>
<div style="left:1278px;top:322.0px;width:256px;height:34px;border:2px solid #333;background:#fff8c4;"></div>
<div class="t" style="left:1299.0px;top:325.8px;font-size:26.6px;line-height:26.6px;color:#3a3a3a;transform:scaleX(1.0008);transform-origin:0 0;">SolarEdge SE15K</div>
<svg style="left:1231px;top:381.8px" width="20" height="34.19999999999999" viewBox="0 0 20 34.19999999999999"><path d="M17 1 A16 16.099999999999994 0 0 0 17 33.19999999999999" stroke="#666" stroke-width="1.1" fill="none"/></svg>
<div style="left:1264px;top:385.3px;width:228px;height:27.69999999999999px;background:#ececec;"></div>
<svg style="left:1240px;top:390.9px" width="16" height="16" viewBox="0 0 16 16"><g fill="#000"><rect x="6" y="0" width="4" height="16"/><rect x="6" y="0" width="4" height="16" transform="rotate(60 8 8)"/><rect x="6" y="0" width="4" height="16" transform="rotate(-60 8 8)"/><circle cx="8" cy="8" r="6.3"/></g><circle cx="8" cy="8" r="3" fill="#fff"/></svg>
<svg style="left:1231px;top:414.0px" width="20" height="32.0" viewBox="0 0 20 32.0"><path d="M17 1 A16 15.0 0 0 0 17 31.0" stroke="#666" stroke-width="1.1" fill="none"/></svg>
<div style="left:1264px;top:417.5px;width:228px;height:25.5px;background:#ececec;"></div>
<svg style="left:1240px;top:422.0px" width="16" height="16" viewBox="0 0 16 16"><g fill="#000"><rect x="6" y="0" width="4" height="16"/><rect x="6" y="0" width="4" height="16" transform="rotate(60 8 8)"/><rect x="6" y="0" width="4" height="16" transform="rotate(-60 8 8)"/><circle cx="8" cy="8" r="6.3"/></g><circle cx="8" cy="8" r="3" fill="#fff"/></svg>
<div style="left:1248px;top:381.8px;width:324px;height:2px;background:#333;"></div>
<div style="left:1244px;top:414.0px;width:328px;height:2px;background:#333;"></div>
<div style="left:1248px;top:444.0px;width:324px;height:2px;background:#333;"></div>
<div style="left:1492px;top:382.8px;width:2px;height:62.19999999999999px;background:#333;"></div>
<div style="left:1570px;top:381.8px;width:2px;height:64.19999999999999px;background:#333;"></div>
<div class="t" style="left:1281.5px;top:392.1px;font-size:18.5px;line-height:18.5px;color:#555555;transform:scaleX(1.0854);transform-origin:0 0;">I_AC_Power_RAW</div>
<div class="t" style="left:1518.0px;top:386.8px;font-size:27px;line-height:27px;color:#333333;transform:scaleX(0.9408);transform-origin:0 0;-webkit-text-stroke:0.6px #333;">AI</div>
<svg style="left:1571px;top:389.5px" width="16" height="19" viewBox="0 0 16 19"><path d="M0 0 H8 Q15 5 15 9.5 Q15 14 8 19 H0 Z" fill="#6ac150"/></svg>
<div class="t" style="left:1281.5px;top:421.6px;font-size:18.5px;line-height:18.5px;color:#555555;transform:scaleX(1.0959);transform-origin:0 0;">I_AC_Power_SF</div>
<div class="t" style="left:1518.0px;top:417.8px;font-size:27px;line-height:27px;color:#333333;transform:scaleX(0.9408);transform-origin:0 0;-webkit-text-stroke:0.6px #333;">AI</div>
<svg style="left:1571px;top:420.5px" width="16" height="19" viewBox="0 0 16 19"><path d="M0 0 H8 Q15 5 15 9.5 Q15 14 8 19 H0 Z" fill="#6ac150"/></svg>
<div style="left:1586px;top:398px;width:266px;height:2px;background:#7a0000;"></div>
<div style="left:1586px;top:429.5px;width:266px;height:2px;background:#7a0000;"></div>
<div style="left:1860px;top:336px;width:218px;height:142px;border:2px solid #6ac150;background:#fff;"></div>
<div style="left:1860px;top:336px;width:218px;height:48px;background:#6ac150;"></div>
<div class="t" style="left:1874.0px;top:346.9px;font-size:25.5px;line-height:25.5px;color:#ffffff;font-weight:bold;transform:scaleX(1.0116);transform-origin:0 0;">Formel</div>
<svg style="left:2040px;top:345.4px" width="30" height="30" viewBox="0 0 30 30"><circle cx="15" cy="15" r="14.8" fill="#fff"/><rect x="13" y="7" width="4" height="2.5" fill="#000"/><rect x="13" y="12" width="4" height="8" fill="#000"/></svg>
<svg style="left:2004.5px;top:345.4px" width="30" height="30" viewBox="0 0 30 30"><circle cx="15" cy="15" r="14.8" fill="#fff"/><g transform="translate(7 7)"><g fill="#000"><rect x="6" y="0" width="4" height="16"/><rect x="6" y="0" width="4" height="16" transform="rotate(60 8 8)"/><rect x="6" y="0" width="4" height="16" transform="rotate(-60 8 8)"/><circle cx="8" cy="8" r="6.3"/></g><circle cx="8" cy="8" r="3" fill="#fff"/></g></svg>
<svg style="left:1846px;top:389.5px" width="18" height="19" viewBox="0 0 18 19"><path d="M0 0 H18 V19 H0 L6 9.5 Z" fill="#00b0dc"/></svg>
<svg style="left:1846px;top:420.5px" width="18" height="19" viewBox="0 0 18 19"><path d="M0 0 H18 V19 H0 L6 9.5 Z" fill="#00b0dc"/></svg>
<svg style="left:1846px;top:450.5px" width="18" height="19" viewBox="0 0 18 19"><path d="M0 0 H18 V19 H0 L6 9.5 Z" fill="#d4d3cf"/></svg>
<div class="t" style="left:1880.5px;top:385.1px;font-size:27px;line-height:27px;color:#111;">I1</div>
<div class="t" style="left:1880.5px;top:416.1px;font-size:27px;line-height:27px;color:#111;">I2</div>
<svg style="left:1877.5px;top:448.5px" width="23" height="23" viewBox="0 0 23 23"><circle cx="11.5" cy="11.5" r="11.5" fill="#9a9a9a"/><path d="M4.5 11.5 H18.5 M11.5 4.5 V18.5" stroke="#fff" stroke-width="3"/></svg>
<div class="t" style="left:2041.0px;top:385.1px;font-size:27px;line-height:27px;color:#111;">R</div>
<svg style="left:2038.5px;top:418.0px" width="23" height="23" viewBox="0 0 23 23"><circle cx="11.5" cy="11.5" r="11.5" fill="#9a9a9a"/><path d="M4.5 11.5 H18.5 M11.5 4.5 V18.5" stroke="#fff" stroke-width="3"/></svg>
<svg style="left:2077px;top:389.5px" width="16" height="19" viewBox="0 0 16 19"><path d="M0 0 H8 Q15 5 15 9.5 Q15 14 8 19 H0 Z" fill="#6ac150"/></svg>
<svg style="left:2077px;top:420.0px" width="16" height="19" viewBox="0 0 16 19"><path d="M0 0 H8 Q15 5 15 9.5 Q15 14 8 19 H0 Z" fill="#d4d3cf"/></svg>
<div style="left:2092px;top:398px;width:266px;height:2px;background:#7a0000;"></div>
<div style="left:2368px;top:306px;width:431px;height:171px;border:2px solid #6ac150;background:#fff;"></div>
<div style="left:2368px;top:306px;width:431px;height:46px;background:#6ac150;"></div>
<div class="t" style="left:2382.0px;top:316.9px;font-size:25.5px;line-height:25.5px;color:#ffffff;font-weight:bold;transform:scaleX(1.0062);transform-origin:0 0;">Wechselrichter (SE15K)</div>
<svg style="left:2761px;top:315.4px" width="30" height="30" viewBox="0 0 30 30"><circle cx="15" cy="15" r="14.8" fill="#fff"/><rect x="13" y="7" width="4" height="2.5" fill="#000"/><rect x="13" y="12" width="4" height="8" fill="#000"/></svg>
<svg style="left:2725.5px;top:315.4px" width="30" height="30" viewBox="0 0 30 30"><circle cx="15" cy="15" r="14.8" fill="#fff"/><g transform="translate(7 7)"><g fill="#000"><rect x="6" y="0" width="4" height="16"/><rect x="6" y="0" width="4" height="16" transform="rotate(60 8 8)"/><rect x="6" y="0" width="4" height="16" transform="rotate(-60 8 8)"/><circle cx="8" cy="8" r="6.3"/></g><circle cx="8" cy="8" r="3" fill="#fff"/></g></svg>
<svg style="left:2690.0px;top:315.4px" width="30" height="30" viewBox="0 0 30 30"><circle cx="15" cy="15" r="14.8" fill="#fff"/><g fill="#6ac150"><rect x="13.5" y="13.5" width="3" height="3"/><rect x="13.5" y="5.5" width="3" height="3"/><rect x="13.5" y="21.5" width="3" height="3"/><rect x="5.5" y="13.5" width="3" height="3"/><rect x="21.5" y="13.5" width="3" height="3"/></g><g fill="#a8dc98"><rect x="14" y="10" width="2" height="2"/><rect x="14" y="18" width="2" height="2"/><rect x="10" y="14" width="2" height="2"/><rect x="18" y="14" width="2" height="2"/></g></svg>
<div style="left:2370px;top:352px;width:427px;height:32px;background:#ececec;"></div>
<div class="t" style="left:2546.7px;top:354.0px;font-size:26px;line-height:26px;color:#333333;">Zähler</div>
<svg style="left:2354px;top:389.3px" width="18" height="19" viewBox="0 0 18 19"><path d="M0 0 H18 V19 H0 L6 9.5 Z" fill="#f7b75c"/></svg>
<div class="t" style="left:2389.0px;top:385.4px;font-size:27px;line-height:27px;color:#111;">Pf</div>
<div class="t" style="left:2751.5px;top:385.4px;font-size:27px;line-height:27px;color:#111;">Pf</div>
<svg style="left:2798px;top:389.3px" width="16" height="19" viewBox="0 0 16 19"><path d="M0 0 H8 Q15 5 15 9.5 Q15 14 8 19 H0 Z" fill="#6ac150"/></svg>
<svg style="left:2354px;top:420.2px" width="18" height="19" viewBox="0 0 18 19"><path d="M0 0 H18 V19 H0 L6 9.5 Z" fill="#f7b75c"/></svg>
<div class="t" style="left:2389.0px;top:416.3px;font-size:27px;line-height:27px;color:#111;">Mr</div>
<div class="t" style="left:2745.5px;top:416.3px;font-size:27px;line-height:27px;color:#111;">Mr</div>
<svg style="left:2798px;top:420.2px" width="16" height="19" viewBox="0 0 16 19"><path d="M0 0 H8 Q15 5 15 9.5 Q15 14 8 19 H0 Z" fill="#6ac150"/></svg>
<div class="t" style="left:2508.0px;top:385.4px;font-size:27px;line-height:27px;color:#8a8a8a;transform:scaleX(1.0109);transform-origin:0 0;">Photovoltaik</div>
<svg style="left:2354px;top:450.2px" width="18" height="19" viewBox="0 0 18 19"><path d="M0 0 H18 V19 H0 L6 9.5 Z" fill="#d4d3cf"/></svg>
<svg style="left:2383.5px;top:448.2px" width="23" height="23" viewBox="0 0 23 23"><circle cx="11.5" cy="11.5" r="11.5" fill="#9a9a9a"/><path d="M4.5 11.5 H18.5 M11.5 4.5 V18.5" stroke="#fff" stroke-width="3"/></svg>
<svg style="left:2759.5px;top:448.2px" width="23" height="23" viewBox="0 0 23 23"><circle cx="11.5" cy="11.5" r="11.5" fill="#9a9a9a"/><path d="M4.5 11.5 H18.5 M11.5 4.5 V18.5" stroke="#fff" stroke-width="3"/></svg>
<svg style="left:2798px;top:450.2px" width="16" height="19" viewBox="0 0 16 19"><path d="M0 0 H8 Q15 5 15 9.5 Q15 14 8 19 H0 Z" fill="#d4d3cf"/></svg>
<div style="left:1860px;top:506px;width:432px;height:169.5px;border:2px solid #6ac150;background:#fff;"></div>
<div style="left:1860px;top:506px;width:432px;height:46px;background:#6ac150;"></div>
<div class="t" style="left:1874.0px;top:516.9px;font-size:25.5px;line-height:25.5px;color:#ffffff;font-weight:bold;transform:scaleX(0.9972);transform-origin:0 0;">Status_Wechselrichter</div>
<svg style="left:2254px;top:515.4px" width="30" height="30" viewBox="0 0 30 30"><circle cx="15" cy="15" r="14.8" fill="#fff"/><rect x="13" y="7" width="4" height="2.5" fill="#000"/><rect x="13" y="12" width="4" height="8" fill="#000"/></svg>
<svg style="left:2218.5px;top:515.4px" width="30" height="30" viewBox="0 0 30 30"><circle cx="15" cy="15" r="14.8" fill="#fff"/><g transform="translate(7 7)"><g fill="#000"><rect x="6" y="0" width="4" height="16"/><rect x="6" y="0" width="4" height="16" transform="rotate(60 8 8)"/><rect x="6" y="0" width="4" height="16" transform="rotate(-60 8 8)"/><circle cx="8" cy="8" r="6.3"/></g><circle cx="8" cy="8" r="3" fill="#fff"/></g></svg>
<div style="left:1862px;top:552px;width:428px;height:32px;background:#ececec;"></div>
<div class="t" style="left:2039.1px;top:554.0px;font-size:26px;line-height:26px;color:#333333;">Status</div>
<svg style="left:1846px;top:588.9px" width="18" height="19" viewBox="0 0 18 19"><path d="M0 0 H18 V19 H0 L6 9.5 Z" fill="#f7b75c"/></svg>
<div class="t" style="left:1880.0px;top:585.0px;font-size:27px;line-height:27px;color:#111;">I1</div>
<svg style="left:1846px;top:618.9px" width="18" height="19" viewBox="0 0 18 19"><path d="M0 0 H18 V19 H0 L6 9.5 Z" fill="#f7b75c"/></svg>
<div class="t" style="left:1880.0px;top:615.0px;font-size:27px;line-height:27px;color:#111;">I2</div>
<div class="t" style="left:2002.0px;top:585.0px;font-size:27px;line-height:27px;color:#8a8a8a;transform:scaleX(1.0116);transform-origin:0 0;">Photovoltaik</div>
<div class="t" style="left:2231.5px;top:585.0px;font-size:27px;line-height:27px;color:#111;">Txt</div>
<svg style="left:2291px;top:588.9px" width="16" height="19" viewBox="0 0 16 19"><path d="M0 0 H8 Q15 5 15 9.5 Q15 14 8 19 H0 Z" fill="#6ac150"/></svg>
<svg style="left:2291px;top:618.9px" width="16" height="19" viewBox="0 0 16 19"><path d="M0 0 H8 Q15 5 15 9.5 Q15 14 8 19 H0 Z" fill="#d4d3cf"/></svg>
<svg style="left:2253.5px;top:616.9px" width="23" height="23" viewBox="0 0 23 23"><circle cx="11.5" cy="11.5" r="11.5" fill="#9a9a9a"/><path d="M4.5 11.5 H18.5 M11.5 4.5 V18.5" stroke="#fff" stroke-width="3"/></svg>
<svg style="left:1846px;top:649.9px" width="18" height="19" viewBox="0 0 18 19"><path d="M0 0 H18 V19 H0 L6 9.5 Z" fill="#d4d3cf"/></svg>
<svg style="left:1877.5px;top:647.9px" width="23" height="23" viewBox="0 0 23 23"><circle cx="11.5" cy="11.5" r="11.5" fill="#9a9a9a"/><path d="M4.5 11.5 H18.5 M11.5 4.5 V18.5" stroke="#fff" stroke-width="3"/></svg>
<svg style="left:1231px;top:581.5px" width="40" height="64" viewBox="0 0 40 64"><path d="M32 1 Q2 1 2 18 V45 Q2 62 32 62" stroke="#555" stroke-width="1.4" fill="none"/></svg>
<div style="left:1264px;top:585.5px;width:228px;height:56px;background:#ececec;"></div>
<svg style="left:1240px;top:605.5px" width="16" height="16" viewBox="0 0 16 16"><g fill="#000"><rect x="6" y="0" width="4" height="16"/><rect x="6" y="0" width="4" height="16" transform="rotate(60 8 8)"/><rect x="6" y="0" width="4" height="16" transform="rotate(-60 8 8)"/><circle cx="8" cy="8" r="6.3"/></g><circle cx="8" cy="8" r="3" fill="#fff"/></svg>
<div style="left:1248px;top:581.5px;width:324px;height:2px;background:#333;"></div>
<div style="left:1248px;top:643.5px;width:324px;height:2px;background:#333;"></div>
<div style="left:1492px;top:582.5px;width:2px;height:62px;background:#333;"></div>
<div style="left:1570px;top:581.5px;width:2px;height:64px;background:#333;"></div>
<div class="t" style="left:1282.5px;top:601.7px;font-size:26px;line-height:26px;color:#333333;font-weight:bold;transform:scaleX(0.9738);transform-origin:0 0;">I_Status</div>
<div class="t" style="left:1518.0px;top:601.1px;font-size:27px;line-height:27px;color:#333333;transform:scaleX(0.9408);transform-origin:0 0;-webkit-text-stroke:0.6px #333;">AI</div>
<svg style="left:1571px;top:588.9px" width="16" height="19" viewBox="0 0 16 19"><path d="M0 0 H8 Q15 5 15 9.5 Q15 14 8 19 H0 Z" fill="#6ac150"/></svg>
<svg style="left:1571px;top:618.9px" width="16" height="19" viewBox="0 0 16 19"><path d="M0 0 H8 Q15 5 15 9.5 Q15 14 8 19 H0 Z" fill="#f04848"/></svg>
<div style="left:1586px;top:597.4px;width:266px;height:2px;background:#7a0000;"></div>
<div style="left:1586px;top:627.4px;width:266px;height:2px;background:#333333;"></div>
<div style="left:1262.5px;top:798.6px;width:254.5px;height:32.6px;border:2px solid #333;background:#fff8c4;"></div>
<div class="t" style="left:1282.4px;top:801.7px;font-size:26.6px;line-height:26.6px;color:#3a3a3a;transform:scaleX(1.0008);transform-origin:0 0;">SolarEdge SE25K</div>
<svg style="left:1231px;top:857.8px" width="20" height="33.0" viewBox="0 0 20 33.0"><path d="M17 1 A16 15.5 0 0 0 17 32.0" stroke="#666" stroke-width="1.1" fill="none"/></svg>
<div style="left:1264px;top:861.3px;width:228px;height:26.5px;background:#ececec;"></div>
<svg style="left:1240px;top:866.3px" width="16" height="16" viewBox="0 0 16 16"><g fill="#000"><rect x="6" y="0" width="4" height="16"/><rect x="6" y="0" width="4" height="16" transform="rotate(60 8 8)"/><rect x="6" y="0" width="4" height="16" transform="rotate(-60 8 8)"/><circle cx="8" cy="8" r="6.3"/></g><circle cx="8" cy="8" r="3" fill="#fff"/></svg>
<svg style="left:1231px;top:888.8px" width="20" height="32.0" viewBox="0 0 20 32.0"><path d="M17 1 A16 15.0 0 0 0 17 31.0" stroke="#666" stroke-width="1.1" fill="none"/></svg>
<div style="left:1264px;top:892.3px;width:228px;height:25.5px;background:#ececec;"></div>
<svg style="left:1240px;top:896.8px" width="16" height="16" viewBox="0 0 16 16"><g fill="#000"><rect x="6" y="0" width="4" height="16"/><rect x="6" y="0" width="4" height="16" transform="rotate(60 8 8)"/><rect x="6" y="0" width="4" height="16" transform="rotate(-60 8 8)"/><circle cx="8" cy="8" r="6.3"/></g><circle cx="8" cy="8" r="3" fill="#fff"/></svg>
<div style="left:1248px;top:857.8px;width:324px;height:2px;background:#333;"></div>
<div style="left:1244px;top:888.8px;width:328px;height:2px;background:#333;"></div>
<div style="left:1248px;top:918.8px;width:324px;height:2px;background:#333;"></div>
<div style="left:1492px;top:858.8px;width:2px;height:61.0px;background:#333;"></div>
<div style="left:1570px;top:857.8px;width:2px;height:63.0px;background:#333;"></div>
<div class="t" style="left:1281.5px;top:868.1px;font-size:18.5px;line-height:18.5px;color:#555555;transform:scaleX(1.0854);transform-origin:0 0;">I_AC_Power_RAW</div>
<div class="t" style="left:1518.0px;top:862.8px;font-size:27px;line-height:27px;color:#333333;transform:scaleX(0.9408);transform-origin:0 0;-webkit-text-stroke:0.6px #333;">AI</div>
<svg style="left:1571px;top:865.5px" width="16" height="19" viewBox="0 0 16 19"><path d="M0 0 H8 Q15 5 15 9.5 Q15 14 8 19 H0 Z" fill="#6ac150"/></svg>
<div class="t" style="left:1281.5px;top:896.4px;font-size:18.5px;line-height:18.5px;color:#555555;transform:scaleX(1.0959);transform-origin:0 0;">I_AC_Power_SF</div>
<div class="t" style="left:1518.0px;top:892.6px;font-size:27px;line-height:27px;color:#333333;transform:scaleX(0.9408);transform-origin:0 0;-webkit-text-stroke:0.6px #333;">AI</div>
<svg style="left:1571px;top:895.3px" width="16" height="19" viewBox="0 0 16 19"><path d="M0 0 H8 Q15 5 15 9.5 Q15 14 8 19 H0 Z" fill="#6ac150"/></svg>
<div style="left:1586px;top:874px;width:266px;height:2px;background:#7a0000;"></div>
<div style="left:1586px;top:904.3px;width:266px;height:2px;background:#7a0000;"></div>
<div style="left:1860px;top:812px;width:218px;height:139.5px;border:2px solid #6ac150;background:#fff;"></div>
<div style="left:1860px;top:812px;width:218px;height:48px;background:#6ac150;"></div>
<div class="t" style="left:1874.0px;top:822.9px;font-size:25.5px;line-height:25.5px;color:#ffffff;font-weight:bold;transform:scaleX(1.0116);transform-origin:0 0;">Formel</div>
<svg style="left:2040px;top:821.4px" width="30" height="30" viewBox="0 0 30 30"><circle cx="15" cy="15" r="14.8" fill="#fff"/><rect x="13" y="7" width="4" height="2.5" fill="#000"/><rect x="13" y="12" width="4" height="8" fill="#000"/></svg>
<svg style="left:2004.5px;top:821.4px" width="30" height="30" viewBox="0 0 30 30"><circle cx="15" cy="15" r="14.8" fill="#fff"/><g transform="translate(7 7)"><g fill="#000"><rect x="6" y="0" width="4" height="16"/><rect x="6" y="0" width="4" height="16" transform="rotate(60 8 8)"/><rect x="6" y="0" width="4" height="16" transform="rotate(-60 8 8)"/><circle cx="8" cy="8" r="6.3"/></g><circle cx="8" cy="8" r="3" fill="#fff"/></g></svg>
<svg style="left:1846px;top:865.5px" width="18" height="19" viewBox="0 0 18 19"><path d="M0 0 H18 V19 H0 L6 9.5 Z" fill="#00b0dc"/></svg>
<svg style="left:1846px;top:895.3px" width="18" height="19" viewBox="0 0 18 19"><path d="M0 0 H18 V19 H0 L6 9.5 Z" fill="#00b0dc"/></svg>
<svg style="left:1846px;top:926.5px" width="18" height="19" viewBox="0 0 18 19"><path d="M0 0 H18 V19 H0 L6 9.5 Z" fill="#d4d3cf"/></svg>
<div class="t" style="left:1880.5px;top:861.1px;font-size:27px;line-height:27px;color:#111;">I1</div>
<div class="t" style="left:1880.5px;top:892.1px;font-size:27px;line-height:27px;color:#111;">I2</div>
<svg style="left:1877.5px;top:924.5px" width="23" height="23" viewBox="0 0 23 23"><circle cx="11.5" cy="11.5" r="11.5" fill="#9a9a9a"/><path d="M4.5 11.5 H18.5 M11.5 4.5 V18.5" stroke="#fff" stroke-width="3"/></svg>
<div class="t" style="left:2041.0px;top:861.1px;font-size:27px;line-height:27px;color:#111;">R</div>
<svg style="left:2038.5px;top:894.0px" width="23" height="23" viewBox="0 0 23 23"><circle cx="11.5" cy="11.5" r="11.5" fill="#9a9a9a"/><path d="M4.5 11.5 H18.5 M11.5 4.5 V18.5" stroke="#fff" stroke-width="3"/></svg>
<svg style="left:2077px;top:865.5px" width="16" height="19" viewBox="0 0 16 19"><path d="M0 0 H8 Q15 5 15 9.5 Q15 14 8 19 H0 Z" fill="#6ac150"/></svg>
<svg style="left:2077px;top:896.0px" width="16" height="19" viewBox="0 0 16 19"><path d="M0 0 H8 Q15 5 15 9.5 Q15 14 8 19 H0 Z" fill="#d4d3cf"/></svg>
<div style="left:2092px;top:874px;width:266px;height:2px;background:#7a0000;"></div>
<div style="left:2368px;top:782px;width:431px;height:171px;border:2px solid #6ac150;background:#fff;"></div>
<div style="left:2368px;top:782px;width:431px;height:46px;background:#6ac150;"></div>
<div class="t" style="left:2382.0px;top:792.9px;font-size:25.5px;line-height:25.5px;color:#ffffff;font-weight:bold;transform:scaleX(1.0062);transform-origin:0 0;">Wechselrichter (SE25K)</div>
<svg style="left:2761px;top:791.4px" width="30" height="30" viewBox="0 0 30 30"><circle cx="15" cy="15" r="14.8" fill="#fff"/><rect x="13" y="7" width="4" height="2.5" fill="#000"/><rect x="13" y="12" width="4" height="8" fill="#000"/></svg>
<svg style="left:2725.5px;top:791.4px" width="30" height="30" viewBox="0 0 30 30"><circle cx="15" cy="15" r="14.8" fill="#fff"/><g transform="translate(7 7)"><g fill="#000"><rect x="6" y="0" width="4" height="16"/><rect x="6" y="0" width="4" height="16" transform="rotate(60 8 8)"/><rect x="6" y="0" width="4" height="16" transform="rotate(-60 8 8)"/><circle cx="8" cy="8" r="6.3"/></g><circle cx="8" cy="8" r="3" fill="#fff"/></g></svg>
<svg style="left:2690.0px;top:791.4px" width="30" height="30" viewBox="0 0 30 30"><circle cx="15" cy="15" r="14.8" fill="#fff"/><g fill="#6ac150"><rect x="13.5" y="13.5" width="3" height="3"/><rect x="13.5" y="5.5" width="3" height="3"/><rect x="13.5" y="21.5" width="3" height="3"/><rect x="5.5" y="13.5" width="3" height="3"/><rect x="21.5" y="13.5" width="3" height="3"/></g><g fill="#a8dc98"><rect x="14" y="10" width="2" height="2"/><rect x="14" y="18" width="2" height="2"/><rect x="10" y="14" width="2" height="2"/><rect x="18" y="14" width="2" height="2"/></g></svg>
<div style="left:2370px;top:828px;width:427px;height:32px;background:#ececec;"></div>
<div class="t" style="left:2546.7px;top:830.0px;font-size:26px;line-height:26px;color:#333333;">Zähler</div>
<svg style="left:2354px;top:865.3px" width="18" height="19" viewBox="0 0 18 19"><path d="M0 0 H18 V19 H0 L6 9.5 Z" fill="#f7b75c"/></svg>
<div class="t" style="left:2389.0px;top:861.4px;font-size:27px;line-height:27px;color:#111;">Pf</div>
<div class="t" style="left:2751.5px;top:861.4px;font-size:27px;line-height:27px;color:#111;">Pf</div>
<svg style="left:2798px;top:865.3px" width="16" height="19" viewBox="0 0 16 19"><path d="M0 0 H8 Q15 5 15 9.5 Q15 14 8 19 H0 Z" fill="#6ac150"/></svg>
<svg style="left:2354px;top:896.1999999999999px" width="18" height="19" viewBox="0 0 18 19"><path d="M0 0 H18 V19 H0 L6 9.5 Z" fill="#f7b75c"/></svg>
<div class="t" style="left:2389.0px;top:892.3px;font-size:27px;line-height:27px;color:#111;">Mr</div>
<div class="t" style="left:2745.5px;top:892.3px;font-size:27px;line-height:27px;color:#111;">Mr</div>
<svg style="left:2798px;top:896.1999999999999px" width="16" height="19" viewBox="0 0 16 19"><path d="M0 0 H8 Q15 5 15 9.5 Q15 14 8 19 H0 Z" fill="#6ac150"/></svg>
<div class="t" style="left:2508.0px;top:861.4px;font-size:27px;line-height:27px;color:#8a8a8a;transform:scaleX(1.0109);transform-origin:0 0;">Photovoltaik</div>
<svg style="left:2354px;top:926.2px" width="18" height="19" viewBox="0 0 18 19"><path d="M0 0 H18 V19 H0 L6 9.5 Z" fill="#d4d3cf"/></svg>
<svg style="left:2383.5px;top:924.2px" width="23" height="23" viewBox="0 0 23 23"><circle cx="11.5" cy="11.5" r="11.5" fill="#9a9a9a"/><path d="M4.5 11.5 H18.5 M11.5 4.5 V18.5" stroke="#fff" stroke-width="3"/></svg>
<svg style="left:2759.5px;top:924.2px" width="23" height="23" viewBox="0 0 23 23"><circle cx="11.5" cy="11.5" r="11.5" fill="#9a9a9a"/><path d="M4.5 11.5 H18.5 M11.5 4.5 V18.5" stroke="#fff" stroke-width="3"/></svg>
<svg style="left:2798px;top:926.2px" width="16" height="19" viewBox="0 0 16 19"><path d="M0 0 H8 Q15 5 15 9.5 Q15 14 8 19 H0 Z" fill="#d4d3cf"/></svg>
<div style="left:1860px;top:998px;width:432px;height:169.5px;border:2px solid #6ac150;background:#fff;"></div>
<div style="left:1860px;top:998px;width:432px;height:46px;background:#6ac150;"></div>
<div class="t" style="left:1874.0px;top:1008.9px;font-size:25.5px;line-height:25.5px;color:#ffffff;font-weight:bold;transform:scaleX(0.9972);transform-origin:0 0;">Status_Wechselrichter</div>
<svg style="left:2254px;top:1007.4px" width="30" height="30" viewBox="0 0 30 30"><circle cx="15" cy="15" r="14.8" fill="#fff"/><rect x="13" y="7" width="4" height="2.5" fill="#000"/><rect x="13" y="12" width="4" height="8" fill="#000"/></svg>
<svg style="left:2218.5px;top:1007.4px" width="30" height="30" viewBox="0 0 30 30"><circle cx="15" cy="15" r="14.8" fill="#fff"/><g transform="translate(7 7)"><g fill="#000"><rect x="6" y="0" width="4" height="16"/><rect x="6" y="0" width="4" height="16" transform="rotate(60 8 8)"/><rect x="6" y="0" width="4" height="16" transform="rotate(-60 8 8)"/><circle cx="8" cy="8" r="6.3"/></g><circle cx="8" cy="8" r="3" fill="#fff"/></g></svg>
<div style="left:1862px;top:1044px;width:428px;height:32px;background:#ececec;"></div>
<div class="t" style="left:2039.1px;top:1046.0px;font-size:26px;line-height:26px;color:#333333;">Status</div>
<svg style="left:1846px;top:1080.9px" width="18" height="19" viewBox="0 0 18 19"><path d="M0 0 H18 V19 H0 L6 9.5 Z" fill="#f7b75c"/></svg>
<div class="t" style="left:1880.0px;top:1077.0px;font-size:27px;line-height:27px;color:#111;">I1</div>
<svg style="left:1846px;top:1110.9px" width="18" height="19" viewBox="0 0 18 19"><path d="M0 0 H18 V19 H0 L6 9.5 Z" fill="#f7b75c"/></svg>
<div class="t" style="left:1880.0px;top:1107.0px;font-size:27px;line-height:27px;color:#111;">I2</div>
<div class="t" style="left:2002.0px;top:1077.0px;font-size:27px;line-height:27px;color:#8a8a8a;transform:scaleX(1.0116);transform-origin:0 0;">Photovoltaik</div>
<div class="t" style="left:2231.5px;top:1077.0px;font-size:27px;line-height:27px;color:#111;">Txt</div>
<svg style="left:2291px;top:1080.9px" width="16" height="19" viewBox="0 0 16 19"><path d="M0 0 H8 Q15 5 15 9.5 Q15 14 8 19 H0 Z" fill="#6ac150"/></svg>
<svg style="left:2291px;top:1110.9px" width="16" height="19" viewBox="0 0 16 19"><path d="M0 0 H8 Q15 5 15 9.5 Q15 14 8 19 H0 Z" fill="#d4d3cf"/></svg>
<svg style="left:2253.5px;top:1108.9px" width="23" height="23" viewBox="0 0 23 23"><circle cx="11.5" cy="11.5" r="11.5" fill="#9a9a9a"/><path d="M4.5 11.5 H18.5 M11.5 4.5 V18.5" stroke="#fff" stroke-width="3"/></svg>
<svg style="left:1846px;top:1141.9px" width="18" height="19" viewBox="0 0 18 19"><path d="M0 0 H18 V19 H0 L6 9.5 Z" fill="#d4d3cf"/></svg>
<svg style="left:1877.5px;top:1139.9px" width="23" height="23" viewBox="0 0 23 23"><circle cx="11.5" cy="11.5" r="11.5" fill="#9a9a9a"/><path d="M4.5 11.5 H18.5 M11.5 4.5 V18.5" stroke="#fff" stroke-width="3"/></svg>
<svg style="left:1231px;top:1073.5px" width="40" height="64" viewBox="0 0 40 64"><path d="M32 1 Q2 1 2 18 V45 Q2 62 32 62" stroke="#555" stroke-width="1.4" fill="none"/></svg>
<div style="left:1264px;top:1077.5px;width:228px;height:56px;background:#ececec;"></div>
<svg style="left:1240px;top:1097.5px" width="16" height="16" viewBox="0 0 16 16"><g fill="#000"><rect x="6" y="0" width="4" height="16"/><rect x="6" y="0" width="4" height="16" transform="rotate(60 8 8)"/><rect x="6" y="0" width="4" height="16" transform="rotate(-60 8 8)"/><circle cx="8" cy="8" r="6.3"/></g><circle cx="8" cy="8" r="3" fill="#fff"/></svg>
<div style="left:1248px;top:1073.5px;width:324px;height:2px;background:#333;"></div>
<div style="left:1248px;top:1135.5px;width:324px;height:2px;background:#333;"></div>
<div style="left:1492px;top:1074.5px;width:2px;height:62px;background:#333;"></div>
<div style="left:1570px;top:1073.5px;width:2px;height:64px;background:#333;"></div>
<div class="t" style="left:1282.5px;top:1093.7px;font-size:26px;line-height:26px;color:#333333;font-weight:bold;transform:scaleX(0.9738);transform-origin:0 0;">I_Status</div>
<div class="t" style="left:1518.0px;top:1093.1px;font-size:27px;line-height:27px;color:#333333;transform:scaleX(0.9408);transform-origin:0 0;-webkit-text-stroke:0.6px #333;">AI</div>
<svg style="left:1571px;top:1080.9px" width="16" height="19" viewBox="0 0 16 19"><path d="M0 0 H8 Q15 5 15 9.5 Q15 14 8 19 H0 Z" fill="#6ac150"/></svg>
<svg style="left:1571px;top:1110.9px" width="16" height="19" viewBox="0 0 16 19"><path d="M0 0 H8 Q15 5 15 9.5 Q15 14 8 19 H0 Z" fill="#f04848"/></svg>
<div style="left:1586px;top:1089.4px;width:266px;height:2px;background:#7a0000;"></div>
<div style="left:1586px;top:1119.4px;width:266px;height:2px;background:#333333;"></div>
<div style="left:1102px;top:1085px;width:43px;height:43px;border-radius:50%;background:#c4c4c4;"></div>
<div style="left:3426px;top:276px;width:218px;height:64px;border:2px solid #333;background:#fff8c4;"></div>
<div class="t" style="left:3446.8px;top:278.0px;font-size:26px;line-height:26px;color:#3a3a3a;transform:scaleX(1.0007);transform-origin:0 0;">Sonnenbatterie</div>
<div class="t" style="left:3500.6px;top:305.5px;font-size:26px;line-height:26px;color:#3a3a3a;">Werte</div>
<svg style="left:3349px;top:381.5px" width="22" height="33.5" viewBox="0 0 22 33.5"><path d="M19 1 A16 15.75 0 0 0 19 32.5" stroke="#666" stroke-width="1.1" fill="none"/></svg>
<div style="left:3382px;top:385.0px;width:230px;height:27.5px;background:#ececec;"></div>
<svg style="left:3358px;top:390.25px" width="16" height="16" viewBox="0 0 16 16"><g fill="#000"><rect x="6" y="0" width="4" height="16"/><rect x="6" y="0" width="4" height="16" transform="rotate(60 8 8)"/><rect x="6" y="0" width="4" height="16" transform="rotate(-60 8 8)"/><circle cx="8" cy="8" r="6.3"/></g><circle cx="8" cy="8" r="3" fill="#fff"/></svg>
<div style="left:3366px;top:381.5px;width:323px;height:2px;background:#333;"></div>
<div style="left:3366px;top:413.0px;width:323px;height:2px;background:#333;"></div>
<div style="left:3612px;top:382.5px;width:2px;height:31.5px;background:#333;"></div>
<div style="left:3688px;top:381.5px;width:2px;height:33.5px;background:#333;"></div>
<div class="t" style="left:3400.5px;top:387.8px;font-size:18.5px;line-height:18.5px;color:#555555;transform:scaleX(1.0620);transform-origin:0 0;">Akt. Batterieladung (...</div>
<div class="t" style="left:3636.7px;top:386.6px;font-size:27px;line-height:27px;color:#333333;transform:scaleX(0.9133);transform-origin:0 0;-webkit-text-stroke:0.6px #333;">VI</div>
<svg style="left:3689px;top:388.75px" width="16" height="19" viewBox="0 0 16 19"><path d="M0 0 H8 Q15 5 15 9.5 Q15 14 8 19 H0 Z" fill="#6ac150"/></svg>
<svg style="left:3349px;top:429.4px" width="22" height="33.5" viewBox="0 0 22 33.5"><path d="M19 1 A16 15.75 0 0 0 19 32.5" stroke="#666" stroke-width="1.1" fill="none"/></svg>
<div style="left:3382px;top:432.9px;width:230px;height:27.5px;background:#ececec;"></div>
<svg style="left:3358px;top:438.15px" width="16" height="16" viewBox="0 0 16 16"><g fill="#000"><rect x="6" y="0" width="4" height="16"/><rect x="6" y="0" width="4" height="16" transform="rotate(60 8 8)"/><rect x="6" y="0" width="4" height="16" transform="rotate(-60 8 8)"/><circle cx="8" cy="8" r="6.3"/></g><circle cx="8" cy="8" r="3" fill="#fff"/></svg>
<div style="left:3366px;top:429.4px;width:323px;height:2px;background:#333;"></div>
<div style="left:3366px;top:460.9px;width:323px;height:2px;background:#333;"></div>
<div style="left:3612px;top:430.4px;width:2px;height:31.5px;background:#333;"></div>
<div style="left:3688px;top:429.4px;width:2px;height:33.5px;background:#333;"></div>
<div class="t" style="left:3402.0px;top:433.6px;font-size:25.7px;line-height:25.7px;color:#333333;font-weight:bold;transform:scaleX(0.9983);transform-origin:0 0;">SoC (Sonnen)</div>
<div class="t" style="left:3636.7px;top:434.5px;font-size:27px;line-height:27px;color:#333333;transform:scaleX(0.9133);transform-origin:0 0;-webkit-text-stroke:0.6px #333;">VI</div>
<svg style="left:3689px;top:436.65px" width="16" height="19" viewBox="0 0 16 19"><path d="M0 0 H8 Q15 5 15 9.5 Q15 14 8 19 H0 Z" fill="#6ac150"/></svg>
<svg style="left:3349px;top:505.8px" width="22" height="33.5" viewBox="0 0 22 33.5"><path d="M19 1 A16 15.75 0 0 0 19 32.5" stroke="#666" stroke-width="1.1" fill="none"/></svg>
<div style="left:3382px;top:509.3px;width:230px;height:27.5px;background:#ececec;"></div>
<svg style="left:3358px;top:514.55px" width="16" height="16" viewBox="0 0 16 16"><g fill="#000"><rect x="6" y="0" width="4" height="16"/><rect x="6" y="0" width="4" height="16" transform="rotate(60 8 8)"/><rect x="6" y="0" width="4" height="16" transform="rotate(-60 8 8)"/><circle cx="8" cy="8" r="6.3"/></g><circle cx="8" cy="8" r="3" fill="#fff"/></svg>
<div style="left:3366px;top:505.8px;width:323px;height:2px;background:#333;"></div>
<div style="left:3366px;top:537.3px;width:323px;height:2px;background:#333;"></div>
<div style="left:3612px;top:506.8px;width:2px;height:31.5px;background:#333;"></div>
<div style="left:3688px;top:505.8px;width:2px;height:33.5px;background:#333;"></div>
<div class="t" style="left:3400.5px;top:512.1px;font-size:18.5px;line-height:18.5px;color:#555555;transform:scaleX(1.0732);transform-origin:0 0;">Hausverbrauch (So...</div>
<div class="t" style="left:3636.7px;top:510.9px;font-size:27px;line-height:27px;color:#333333;transform:scaleX(0.9133);transform-origin:0 0;-webkit-text-stroke:0.6px #333;">VI</div>
<svg style="left:3689px;top:513.05px" width="16" height="19" viewBox="0 0 16 19"><path d="M0 0 H8 Q15 5 15 9.5 Q15 14 8 19 H0 Z" fill="#6ac150"/></svg>
<svg style="left:3349px;top:567.6px" width="22" height="33.5" viewBox="0 0 22 33.5"><path d="M19 1 A16 15.75 0 0 0 19 32.5" stroke="#666" stroke-width="1.1" fill="none"/></svg>
<div style="left:3382px;top:571.1px;width:230px;height:27.5px;background:#ececec;"></div>
<svg style="left:3358px;top:576.35px" width="16" height="16" viewBox="0 0 16 16"><g fill="#000"><rect x="6" y="0" width="4" height="16"/><rect x="6" y="0" width="4" height="16" transform="rotate(60 8 8)"/><rect x="6" y="0" width="4" height="16" transform="rotate(-60 8 8)"/><circle cx="8" cy="8" r="6.3"/></g><circle cx="8" cy="8" r="3" fill="#fff"/></svg>
<div style="left:3366px;top:567.6px;width:323px;height:2px;background:#333;"></div>
<div style="left:3366px;top:599.1px;width:323px;height:2px;background:#333;"></div>
<div style="left:3612px;top:568.6px;width:2px;height:31.5px;background:#333;"></div>
<div style="left:3688px;top:567.6px;width:2px;height:33.5px;background:#333;"></div>
<div class="t" style="left:3400.5px;top:573.9px;font-size:18.5px;line-height:18.5px;color:#555555;transform:scaleX(1.0670);transform-origin:0 0;">Akt. Netzleistung (S...</div>
<div class="t" style="left:3636.7px;top:572.7px;font-size:27px;line-height:27px;color:#333333;transform:scaleX(0.9133);transform-origin:0 0;-webkit-text-stroke:0.6px #333;">VI</div>
<svg style="left:3689px;top:574.85px" width="16" height="19" viewBox="0 0 16 19"><path d="M0 0 H8 Q15 5 15 9.5 Q15 14 8 19 H0 Z" fill="#6ac150"/></svg>
<svg style="left:3349px;top:628.5px" width="22" height="33.5" viewBox="0 0 22 33.5"><path d="M19 1 A16 15.75 0 0 0 19 32.5" stroke="#666" stroke-width="1.1" fill="none"/></svg>
<div style="left:3382px;top:632.0px;width:230px;height:27.5px;background:#ececec;"></div>
<svg style="left:3358px;top:637.25px" width="16" height="16" viewBox="0 0 16 16"><g fill="#000"><rect x="6" y="0" width="4" height="16"/><rect x="6" y="0" width="4" height="16" transform="rotate(60 8 8)"/><rect x="6" y="0" width="4" height="16" transform="rotate(-60 8 8)"/><circle cx="8" cy="8" r="6.3"/></g><circle cx="8" cy="8" r="3" fill="#fff"/></svg>
<div style="left:3366px;top:628.5px;width:323px;height:2px;background:#333;"></div>
<div style="left:3366px;top:660.0px;width:323px;height:2px;background:#333;"></div>
<div style="left:3612px;top:629.5px;width:2px;height:31.5px;background:#333;"></div>
<div style="left:3688px;top:628.5px;width:2px;height:33.5px;background:#333;"></div>
<div class="t" style="left:3400.5px;top:634.8px;font-size:18.5px;line-height:18.5px;color:#555555;transform:scaleX(1.0742);transform-origin:0 0;">Akt. PV-Produktion (...</div>
<div class="t" style="left:3636.7px;top:633.6px;font-size:27px;line-height:27px;color:#333333;transform:scaleX(0.9133);transform-origin:0 0;-webkit-text-stroke:0.6px #333;">VI</div>
<svg style="left:3689px;top:635.75px" width="16" height="19" viewBox="0 0 16 19"><path d="M0 0 H8 Q15 5 15 9.5 Q15 14 8 19 H0 Z" fill="#6ac150"/></svg>
<svg style="left:3700px;top:390px" width="114" height="190" viewBox="0 0 114 190"><path d="M4 8.5 H75 Q79 8.5 79 12.5 V82 Q79 86 83 86 H114" stroke="#7a0000" stroke-width="2" fill="none"/><path d="M4 56 H60 Q64 56 64 60 V175 Q64 179 68 179 H114" stroke="#7a0000" stroke-width="2" fill="none"/></svg>
<svg style="left:1028px;top:1766px" width="26" height="26" viewBox="0 0 26 26"><rect x="0" y="0" width="26" height="26" fill="#f4f4f4"/><path d="M1 25 H25 V1" stroke="#2a2a2a" stroke-width="2" fill="none"/><path d="M8 9 H18 L13 14 Z" fill="#333"/></svg>
<svg style="left:1060px;top:1766px" width="26" height="26" viewBox="0 0 26 26"><rect x="0" y="0" width="26" height="26" fill="#f4f4f4"/><path d="M1 25 H25 V1" stroke="#2a2a2a" stroke-width="2" fill="none"/><path d="M7 6 H14 M7 6 V13" stroke="#333" stroke-width="2" fill="none"/><path d="M12 12 H18 V18 H12 Z" fill="#333"/><path d="M11 11 L15 15" stroke="#333" stroke-width="2"/></svg>
<svg style="left:1092px;top:1766px" width="26" height="26" viewBox="0 0 26 26"><rect x="0" y="0" width="26" height="26" fill="#f4f4f4"/><path d="M1 25 H25 V1" stroke="#2a2a2a" stroke-width="2" fill="none"/><rect x="6" y="6" width="2" height="14" fill="#333"/><path d="M18 6 V20 L10 13 Z" fill="#333"/></svg>
<svg style="left:1124px;top:1766px" width="26" height="26" viewBox="0 0 26 26"><rect x="0" y="0" width="26" height="26" fill="#f4f4f4"/><path d="M1 25 H25 V1" stroke="#2a2a2a" stroke-width="2" fill="none"/><path d="M16 6 V20 L8 13 Z" fill="#333"/></svg>
<svg style="left:1156px;top:1766px" width="26" height="26" viewBox="0 0 26 26"><rect x="0" y="0" width="26" height="26" fill="#f4f4f4"/><path d="M1 25 H25 V1" stroke="#2a2a2a" stroke-width="2" fill="none"/><path d="M10 6 V20 L18 13 Z" fill="#333"/></svg>
<svg style="left:1188px;top:1766px" width="26" height="26" viewBox="0 0 26 26"><rect x="0" y="0" width="26" height="26" fill="#f4f4f4"/><path d="M1 25 H25 V1" stroke="#2a2a2a" stroke-width="2" fill="none"/><path d="M8 6 V20 L16 13 Z" fill="#333"/><rect x="18" y="6" width="2" height="14" fill="#333"/></svg>
<div style="left:1224px;top:1762px;width:2256px;height:33px;background:#ffffff;"></div>
<div style="left:1224px;top:1794px;width:2256px;height:2px;background:#2a2a2a;"></div>
<div class="t" style="left:1225.0px;top:1766.2px;font-size:22.8px;line-height:22.8px;color:#1a1a1a;transform:scaleX(1.0002);transform-origin:0 0;">HH-UG/Garage-Wallbox</div>
<div class="t" style="left:1501.3px;top:1766.2px;font-size:22.8px;line-height:22.8px;color:#1a1a1a;transform:scaleX(1.0186);transform-origin:0 0;">HH/Audio</div>
<div class="t" style="left:1630.5px;top:1766.2px;font-size:22.8px;line-height:22.8px;color:#1a1a1a;transform:scaleX(0.9866);transform-origin:0 0;">HH/Fenster</div>
<div class="t" style="left:1775.4px;top:1766.2px;font-size:22.8px;line-height:22.8px;color:#1a1a1a;transform:scaleX(1.0107);transform-origin:0 0;">HH/Hauseingang</div>
<div class="t" style="left:1980.4px;top:1766.2px;font-size:22.8px;line-height:22.8px;color:#1a1a1a;transform:scaleX(0.9902);transform-origin:0 0;">Verbraucher</div>
<div class="t" style="left:2134.4px;top:1766.2px;font-size:22.8px;line-height:22.8px;color:#1a1a1a;transform:scaleX(1.0051);transform-origin:0 0;">Zentral/Energiefluss</div>
<div class="t" style="left:2370.2px;top:1766.2px;font-size:22.8px;line-height:22.8px;color:#1a1a1a;transform:scaleX(1.0623);transform-origin:0 0;">Zentral/Müllabfuhr</div>
<div class="t" style="left:2595.7px;top:1766.2px;font-size:22.8px;line-height:22.8px;color:#1a1a1a;font-weight:bold;transform:scaleX(0.9932);transform-origin:0 0;">Zentral/PV-Anlage</div>
<div class="t" style="left:2819.8px;top:1766.2px;font-size:22.8px;line-height:22.8px;color:#1a1a1a;transform:scaleX(1.0221);transform-origin:0 0;">Zentral/Tag-/Nacht</div>
<div class="t" style="left:3045.5px;top:1766.2px;font-size:22.8px;line-height:22.8px;color:#1a1a1a;transform:scaleX(1.0450);transform-origin:0 0;">Zentral/Wetterstation</div>
<div class="t" style="left:3300.5px;top:1766.2px;font-size:22.8px;line-height:22.8px;color:#1a1a1a;transform:scaleX(1.0336);transform-origin:0 0;">Zentral/Zirkulatio</div>
<svg style="left:1476.3px;top:1761px" width="22" height="36" viewBox="0 0 22 36"><path d="M1 35 L9 20 L20 35 Z" fill="#efefef"/><path d="M0 34 L18 1" stroke="#2a2a2a" stroke-width="2" fill="none"/><path d="M8 17 L20 34" stroke="#2a2a2a" stroke-width="2" fill="none"/></svg>
<svg style="left:1605.5px;top:1761px" width="22" height="36" viewBox="0 0 22 36"><path d="M1 35 L9 20 L20 35 Z" fill="#efefef"/><path d="M0 34 L18 1" stroke="#2a2a2a" stroke-width="2" fill="none"/><path d="M8 17 L20 34" stroke="#2a2a2a" stroke-width="2" fill="none"/></svg>
<svg style="left:1750.4px;top:1761px" width="22" height="36" viewBox="0 0 22 36"><path d="M1 35 L9 20 L20 35 Z" fill="#efefef"/><path d="M0 34 L18 1" stroke="#2a2a2a" stroke-width="2" fill="none"/><path d="M8 17 L20 34" stroke="#2a2a2a" stroke-width="2" fill="none"/></svg>
<svg style="left:1955.4px;top:1761px" width="22" height="36" viewBox="0 0 22 36"><path d="M1 35 L9 20 L20 35 Z" fill="#efefef"/><path d="M0 34 L18 1" stroke="#2a2a2a" stroke-width="2" fill="none"/><path d="M8 17 L20 34" stroke="#2a2a2a" stroke-width="2" fill="none"/></svg>
<svg style="left:2109.4px;top:1761px" width="22" height="36" viewBox="0 0 22 36"><path d="M1 35 L9 20 L20 35 Z" fill="#efefef"/><path d="M0 34 L18 1" stroke="#2a2a2a" stroke-width="2" fill="none"/><path d="M8 17 L20 34" stroke="#2a2a2a" stroke-width="2" fill="none"/></svg>
<svg style="left:2345.2px;top:1761px" width="22" height="36" viewBox="0 0 22 36"><path d="M1 35 L9 20 L20 35 Z" fill="#efefef"/><path d="M0 34 L18 1" stroke="#2a2a2a" stroke-width="2" fill="none"/><path d="M8 17 L20 34" stroke="#2a2a2a" stroke-width="2" fill="none"/></svg>
<svg style="left:2570.7px;top:1761px" width="22" height="36" viewBox="0 0 22 36"><path d="M1 35 L9 20 L20 35 Z" fill="#efefef"/><path d="M0 34 L18 1" stroke="#2a2a2a" stroke-width="2" fill="none"/><path d="M8 17 L20 34" stroke="#2a2a2a" stroke-width="2" fill="none"/></svg>
<svg style="left:2794.8px;top:1761px" width="22" height="36" viewBox="0 0 22 36"><path d="M1 35 L9 20 L20 35 Z" fill="#efefef"/><path d="M0 34 L18 1" stroke="#2a2a2a" stroke-width="2" fill="none"/><path d="M8 17 L20 34" stroke="#2a2a2a" stroke-width="2" fill="none"/></svg>
<svg style="left:3020.5px;top:1761px" width="22" height="36" viewBox="0 0 22 36"><path d="M1 35 L9 20 L20 35 Z" fill="#efefef"/><path d="M0 34 L18 1" stroke="#2a2a2a" stroke-width="2" fill="none"/><path d="M8 17 L20 34" stroke="#2a2a2a" stroke-width="2" fill="none"/></svg>
<svg style="left:3275.5px;top:1761px" width="22" height="36" viewBox="0 0 22 36"><path d="M1 35 L9 20 L20 35 Z" fill="#efefef"/><path d="M0 34 L18 1" stroke="#2a2a2a" stroke-width="2" fill="none"/><path d="M8 17 L20 34" stroke="#2a2a2a" stroke-width="2" fill="none"/></svg>
<div style="left:2577px;top:1760px;width:232px;height:2px;background:#ffffff;"></div>
<div style="left:3480px;top:1762px;width:330px;height:34px;background:#efefef;"></div>
<div style="left:3480px;top:1764px;width:2px;height:32px;background:#2a2a2a;"></div>
<div style="left:3480px;top:1764px;width:8px;height:2px;background:#2a2a2a;"></div>
<div style="left:3483px;top:1766px;width:6px;height:30px;background:#e4e4e4;"></div>
<div style="left:3524px;top:1778px;width:184px;height:4px;background:#888888;"></div>
<div style="left:12px;top:1806px;width:3816px;height:794px;background:#f4f4f4;"></div>
<div class="t" style="left:21.3px;top:1823.0px;font-size:22px;line-height:22px;color:#3a3a3a;transform:scaleX(1.0732);transform-origin:0 0;">Modbus</div>
<div style="left:12px;top:1854px;width:3816px;height:2px;background:#dcdcdc;"></div>
<div style="left:18px;top:1860px;width:3810px;height:740px;background:#efefef;"></div>
<div style="left:38px;top:1882.5px;width:718px;height:39px;border:1.5px solid #d2d2d2;border-bottom-color:#bcbcbc;border-radius:3px;background:#fdfdfd;"></div>
<div class="t" style="left:44.5px;top:1892.2px;font-size:22.2px;line-height:22.2px;color:#1a1a1a;transform:scaleX(0.9990);transform-origin:0 0;">Modbus Extension (Schaltschrank R01 P01, 09:D8:D3:96, Verteiler)</div>
<svg style="left:729px;top:1897px" width="18" height="11" viewBox="0 0 18 11"><path d="M1 1.5 L9 9.5 L17 1.5" stroke="#555" stroke-width="1.6" fill="none"/></svg>
<div style="left:769px;top:1881px;width:42px;height:42px;border:1.5px solid #d6d6d6;border-radius:8px;background:#fcfcfc;"></div>
<div style="left:827px;top:1881px;width:42px;height:42px;border:1.5px solid #d6d6d6;border-radius:8px;background:#fcfcfc;"></div>
<div style="left:884.6px;top:1881px;width:43px;height:42px;border:2px solid #0a5fb4;border-radius:8px;background:#cce4f7;"></div>
<div style="left:983px;top:1881px;width:42px;height:42px;border:1.5px solid #d6d6d6;border-radius:8px;background:#fcfcfc;"></div>
<div style="left:1040.6px;top:1881px;width:42px;height:42px;border:1.5px solid #d6d6d6;border-radius:8px;background:#fcfcfc;"></div>
<div style="left:1138.5px;top:1881px;width:42px;height:42px;border:1.5px solid #d6d6d6;border-radius:8px;background:#fcfcfc;"></div>
<div style="left:778.5px;top:1890.5px;width:23.5px;height:23px;border:2.5px solid #e8334a;"></div>
<svg style="left:836px;top:1889px" width="24" height="26" viewBox="0 0 24 26"><path d="M0 5 H24" stroke="#111" stroke-width="2.2"/><path d="M8 5 V1.5 H16 V5" stroke="#111" stroke-width="2" fill="none"/><path d="M3 5 L4.5 24 H19.5 L21 5" stroke="#111" stroke-width="2.2" fill="none"/><path d="M9 10 V18 M15 10 V18" stroke="#111" stroke-width="2.2"/></svg>
<svg style="left:897px;top:1889px" width="18" height="26" viewBox="0 0 18 26"><path d="M3 8 L9 2 L15 8" stroke="#444" stroke-width="2.2" fill="none"/><rect x="7" y="11" width="4" height="4" fill="#111"/><path d="M3 18 L9 24 L15 18" stroke="#444" stroke-width="2.2" fill="none"/></svg>
<svg style="left:991px;top:1889px" width="26" height="26" viewBox="0 0 26 26"><path d="M2 2 V24 H24 V2 H11 L9 5 H2" stroke="#111" stroke-width="2.4" fill="none"/><path d="M11 5 H24" stroke="#111" stroke-width="1.5"/></svg>
<svg style="left:1049px;top:1889px" width="26" height="26" viewBox="0 0 26 26"><path d="M13 1 V17" stroke="#666" stroke-width="2.4"/><path d="M6 11 L13 18 L20 11" stroke="#222" stroke-width="2.4" fill="none"/><path d="M1.5 17 V24 H24.5 V17" stroke="#111" stroke-width="2.4" fill="none"/></svg>
<svg style="left:1147px;top:1889px" width="26" height="26" viewBox="0 0 26 26"><path d="M11 2 H2 V24 H24 V15" stroke="#111" stroke-width="2.6" fill="none"/><path d="M12 14 L23 3 M15 2.5 H23.5 V11" stroke="#333" stroke-width="2.2" fill="none"/></svg>
<div style="left:38px;top:1940px;width:3790px;height:42px;background:#ffffff;"></div>
<div style="left:38px;top:1982px;width:3790px;height:2px;background:#707070;"></div>
<div class="t" style="left:43.6px;top:1951.1px;font-size:24px;line-height:24px;color:#8a8a8a;transform:scaleX(1.0428);transform-origin:0 0;">Filter by...</div>
<div style="left:36px;top:1996px;width:3792px;height:604px;background:#ffffff;"></div>
<div style="left:36px;top:1996px;width:3792px;height:2px;background:#6e7278;"></div>
<div style="left:36px;top:1996px;width:2px;height:604px;background:#6e7278;"></div>
<svg style="left:50px;top:2006px" width="24" height="24" viewBox="0 0 16 16"><g fill="#111"><rect x="6" y="0" width="4" height="16"/><rect x="6" y="0" width="4" height="16" transform="rotate(60 8 8)"/><rect x="6" y="0" width="4" height="16" transform="rotate(-60 8 8)"/><circle cx="8" cy="8" r="6.3"/></g><circle cx="8" cy="8" r="2.8" fill="#fff"/></svg>
<svg style="left:121px;top:1998px" width="18" height="10" viewBox="0 0 18 10"><path d="M1.5 9 L9 1.5 L16.5 9" stroke="#444" stroke-width="1.6" fill="none"/></svg>
<div style="left:91px;top:2044.3px;width:3705px;height:30.700000000000045px;background:#f7f77c;"></div>
<div style="left:91px;top:2074.2px;width:3705px;height:2px;background:#d8d8d8;z-index:1;"></div>
<div class="t" style="left:124.1px;top:2044.3px;font-size:21.5px;line-height:21.5px;color:#1a1a1a;">516</div>
<div class="t" style="left:175.6px;top:2044.3px;font-size:21.5px;line-height:21.5px;color:#1a1a1a;transform:scaleX(0.9877);transform-origin:0 0;">15:48:56.594</div>
<div class="t" style="left:334.5px;top:2044.3px;font-size:21.5px;line-height:21.5px;color:#1a1a1a;transform:scaleX(0.9934);transform-origin:0 0;">SolarEdge WR SE25K</div>
<div class="t" style="left:633.0px;top:2044.3px;font-size:21.5px;line-height:21.5px;color:#1a1a1a;">1</div>
<div class="t" style="left:812.4px;top:2044.3px;font-size:21.5px;line-height:21.5px;color:#1a1a1a;transform:scaleX(1.0863);transform-origin:0 0;">3 - Read holding register(4x)</div>
<div class="t" style="left:1212.5px;top:2044.3px;font-size:21.5px;line-height:21.5px;color:#1a1a1a;">4</div>
<div class="t" style="left:1911.5px;top:2044.3px;font-size:21.5px;line-height:21.5px;color:#1a1a1a;transform:scaleX(0.9918);transform-origin:0 0;">40107</div>
<div class="t" style="left:2053.0px;top:2044.3px;font-size:21.5px;line-height:21.5px;color:#1a1a1a;transform:scaleX(1.0298);transform-origin:0 0;">I_Status [4]</div>
<div style="left:91px;top:2074.5px;width:3705px;height:46.5300000000002px;background:#f7f77c;"></div>
<div style="left:91px;top:2120.23px;width:3705px;height:2px;background:#d8d8d8;z-index:1;"></div>
<div class="t" style="left:124.1px;top:2090.3px;font-size:21.5px;line-height:21.5px;color:#1a1a1a;">517</div>
<div class="t" style="left:175.6px;top:2090.3px;font-size:21.5px;line-height:21.5px;color:#1a1a1a;transform:scaleX(0.9877);transform-origin:0 0;">15:48:56.694</div>
<div class="t" style="left:334.5px;top:2090.3px;font-size:21.5px;line-height:21.5px;color:#1a1a1a;transform:scaleX(0.9934);transform-origin:0 0;">SolarEdge WR SE15K</div>
<div class="t" style="left:633.0px;top:2090.3px;font-size:21.5px;line-height:21.5px;color:#1a1a1a;">2</div>
<div class="t" style="left:812.4px;top:2090.3px;font-size:21.5px;line-height:21.5px;color:#1a1a1a;transform:scaleX(1.0863);transform-origin:0 0;">3 - Read holding register(4x)</div>
<div class="t" style="left:1212.5px;top:2090.3px;font-size:21.5px;line-height:21.5px;color:#1a1a1a;transform:scaleX(0.9701);transform-origin:0 0;">5800</div>
<div class="t" style="left:1911.5px;top:2090.3px;font-size:21.5px;line-height:21.5px;color:#1a1a1a;transform:scaleX(0.9918);transform-origin:0 0;">40083</div>
<div class="t" style="left:2053.0px;top:2090.3px;font-size:21.5px;line-height:21.5px;color:#1a1a1a;transform:scaleX(1.0163);transform-origin:0 0;">I_AC_Power_RAW [5800]</div>
<div style="left:91px;top:2120.53px;width:3705px;height:46.529999999999745px;background:#f7f77c;"></div>
<div style="left:91px;top:2166.2599999999998px;width:3705px;height:2px;background:#d8d8d8;z-index:1;"></div>
<div class="t" style="left:124.1px;top:2136.3px;font-size:21.5px;line-height:21.5px;color:#1a1a1a;">518</div>
<div class="t" style="left:175.6px;top:2136.3px;font-size:21.5px;line-height:21.5px;color:#1a1a1a;transform:scaleX(0.9877);transform-origin:0 0;">15:48:56.804</div>
<div class="t" style="left:334.5px;top:2136.3px;font-size:21.5px;line-height:21.5px;color:#1a1a1a;transform:scaleX(0.9934);transform-origin:0 0;">SolarEdge WR SE15K</div>
<div class="t" style="left:633.0px;top:2136.3px;font-size:21.5px;line-height:21.5px;color:#1a1a1a;">2</div>
<div class="t" style="left:812.4px;top:2136.3px;font-size:21.5px;line-height:21.5px;color:#1a1a1a;transform:scaleX(1.0863);transform-origin:0 0;">3 - Read holding register(4x)</div>
<div class="t" style="left:1212.5px;top:2136.3px;font-size:21.5px;line-height:21.5px;color:#1a1a1a;">-1</div>
<div class="t" style="left:1911.5px;top:2136.3px;font-size:21.5px;line-height:21.5px;color:#1a1a1a;transform:scaleX(0.9918);transform-origin:0 0;">40084</div>
<div class="t" style="left:2053.0px;top:2136.3px;font-size:21.5px;line-height:21.5px;color:#1a1a1a;transform:scaleX(1.0133);transform-origin:0 0;">I_AC_Power_SF [-1]</div>
<div style="left:91px;top:2166.56px;width:3705px;height:46.5300000000002px;background:#f7f77c;"></div>
<div style="left:91px;top:2212.29px;width:3705px;height:2px;background:#d8d8d8;z-index:1;"></div>
<div class="t" style="left:124.1px;top:2182.4px;font-size:21.5px;line-height:21.5px;color:#1a1a1a;">519</div>
<div class="t" style="left:175.6px;top:2182.4px;font-size:21.5px;line-height:21.5px;color:#1a1a1a;transform:scaleX(0.9877);transform-origin:0 0;">15:48:56.904</div>
<div class="t" style="left:334.5px;top:2182.4px;font-size:21.5px;line-height:21.5px;color:#1a1a1a;transform:scaleX(0.9934);transform-origin:0 0;">SolarEdge WR SE15K</div>
<div class="t" style="left:633.0px;top:2182.4px;font-size:21.5px;line-height:21.5px;color:#1a1a1a;">2</div>
<div class="t" style="left:812.4px;top:2182.4px;font-size:21.5px;line-height:21.5px;color:#1a1a1a;transform:scaleX(1.0863);transform-origin:0 0;">3 - Read holding register(4x)</div>
<div class="t" style="left:1212.5px;top:2182.4px;font-size:21.5px;line-height:21.5px;color:#1a1a1a;">4</div>
<div class="t" style="left:1911.5px;top:2182.4px;font-size:21.5px;line-height:21.5px;color:#1a1a1a;transform:scaleX(0.9918);transform-origin:0 0;">40107</div>
<div class="t" style="left:2053.0px;top:2182.4px;font-size:21.5px;line-height:21.5px;color:#1a1a1a;transform:scaleX(1.0298);transform-origin:0 0;">I_Status [4]</div>
<div style="left:91px;top:2212.59px;width:3705px;height:46.529999999999745px;background:#f3c7cd;"></div>
<div style="left:91px;top:2258.3199999999997px;width:3705px;height:2px;background:#d8d8d8;z-index:1;"></div>
<div class="t" style="left:124.1px;top:2228.4px;font-size:21.5px;line-height:21.5px;color:#1a1a1a;">520</div>
<div class="t" style="left:175.6px;top:2228.4px;font-size:21.5px;line-height:21.5px;color:#1a1a1a;transform:scaleX(0.9877);transform-origin:0 0;">15:48:57.844</div>
<div class="t" style="left:334.5px;top:2228.4px;font-size:21.5px;line-height:21.5px;color:#1a1a1a;transform:scaleX(0.9934);transform-origin:0 0;">SolarEdge WR SE25K</div>
<div class="t" style="left:633.0px;top:2228.4px;font-size:21.5px;line-height:21.5px;color:#1a1a1a;">1</div>
<div class="t" style="left:812.4px;top:2228.4px;font-size:21.5px;line-height:21.5px;color:#1a1a1a;transform:scaleX(1.0469);transform-origin:0 0;">Fehler</div>
<div class="t" style="left:1212.5px;top:2228.4px;font-size:21.5px;line-height:21.5px;color:#1a1a1a;transform:scaleX(1.1201);transform-origin:0 0;">Keine Antwort</div>
<div class="t" style="left:1911.5px;top:2228.4px;font-size:21.5px;line-height:21.5px;color:#1a1a1a;transform:scaleX(0.9918);transform-origin:0 0;">40083</div>
<div class="t" style="left:2053.0px;top:2228.4px;font-size:21.5px;line-height:21.5px;color:#1a1a1a;transform:scaleX(0.9993);transform-origin:0 0;">I_AC_Power_RAW</div>
<div style="left:91px;top:2258.62px;width:3705px;height:46.5300000000002px;background:#f3c7cd;"></div>
<div style="left:91px;top:2304.35px;width:3705px;height:2px;background:#d8d8d8;z-index:1;"></div>
<div class="t" style="left:124.1px;top:2274.4px;font-size:21.5px;line-height:21.5px;color:#1a1a1a;">521</div>
<div class="t" style="left:175.6px;top:2274.4px;font-size:21.5px;line-height:21.5px;color:#1a1a1a;transform:scaleX(0.9877);transform-origin:0 0;">15:48:58.993</div>
<div class="t" style="left:334.5px;top:2274.4px;font-size:21.5px;line-height:21.5px;color:#1a1a1a;transform:scaleX(0.9934);transform-origin:0 0;">SolarEdge WR SE25K</div>
<div class="t" style="left:633.0px;top:2274.4px;font-size:21.5px;line-height:21.5px;color:#1a1a1a;">1</div>
<div class="t" style="left:812.4px;top:2274.4px;font-size:21.5px;line-height:21.5px;color:#1a1a1a;transform:scaleX(1.0469);transform-origin:0 0;">Fehler</div>
<div class="t" style="left:1212.5px;top:2274.4px;font-size:21.5px;line-height:21.5px;color:#1a1a1a;transform:scaleX(1.1201);transform-origin:0 0;">Keine Antwort</div>
<div class="t" style="left:1911.5px;top:2274.4px;font-size:21.5px;line-height:21.5px;color:#1a1a1a;transform:scaleX(0.9918);transform-origin:0 0;">40083</div>
<div class="t" style="left:2053.0px;top:2274.4px;font-size:21.5px;line-height:21.5px;color:#1a1a1a;transform:scaleX(0.9993);transform-origin:0 0;">I_AC_Power_RAW</div>
<div style="left:91px;top:2304.65px;width:3705px;height:46.529999999999745px;background:#f3c7cd;"></div>
<div style="left:91px;top:2350.3799999999997px;width:3705px;height:2px;background:#d8d8d8;z-index:1;"></div>
<div class="t" style="left:124.1px;top:2320.5px;font-size:21.5px;line-height:21.5px;color:#1a1a1a;">522</div>
<div class="t" style="left:175.6px;top:2320.5px;font-size:21.5px;line-height:21.5px;color:#1a1a1a;transform:scaleX(0.9877);transform-origin:0 0;">15:48:59.925</div>
<div class="t" style="left:334.5px;top:2320.5px;font-size:21.5px;line-height:21.5px;color:#1a1a1a;transform:scaleX(0.9934);transform-origin:0 0;">SolarEdge WR SE25K</div>
<div class="t" style="left:633.0px;top:2320.5px;font-size:21.5px;line-height:21.5px;color:#1a1a1a;">1</div>
<div class="t" style="left:812.4px;top:2320.5px;font-size:21.5px;line-height:21.5px;color:#1a1a1a;transform:scaleX(1.0469);transform-origin:0 0;">Fehler</div>
<div class="t" style="left:1212.5px;top:2320.5px;font-size:21.5px;line-height:21.5px;color:#1a1a1a;transform:scaleX(1.1201);transform-origin:0 0;">Keine Antwort</div>
<div class="t" style="left:1911.5px;top:2320.5px;font-size:21.5px;line-height:21.5px;color:#1a1a1a;transform:scaleX(0.9918);transform-origin:0 0;">40084</div>
<div class="t" style="left:2053.0px;top:2320.5px;font-size:21.5px;line-height:21.5px;color:#1a1a1a;">I_AC_Power_SF</div>
<div style="left:91px;top:2350.68px;width:3705px;height:46.5300000000002px;background:#f3c7cd;"></div>
<div style="left:91px;top:2396.41px;width:3705px;height:2px;background:#d8d8d8;z-index:1;"></div>
<div class="t" style="left:124.1px;top:2366.5px;font-size:21.5px;line-height:21.5px;color:#1a1a1a;">523</div>
<div class="t" style="left:175.6px;top:2366.5px;font-size:21.5px;line-height:21.5px;color:#1a1a1a;transform:scaleX(0.9877);transform-origin:0 0;">15:49:01.073</div>
<div class="t" style="left:334.5px;top:2366.5px;font-size:21.5px;line-height:21.5px;color:#1a1a1a;transform:scaleX(0.9934);transform-origin:0 0;">SolarEdge WR SE25K</div>
<div class="t" style="left:633.0px;top:2366.5px;font-size:21.5px;line-height:21.5px;color:#1a1a1a;">1</div>
<div class="t" style="left:812.4px;top:2366.5px;font-size:21.5px;line-height:21.5px;color:#1a1a1a;transform:scaleX(1.0469);transform-origin:0 0;">Fehler</div>
<div class="t" style="left:1212.5px;top:2366.5px;font-size:21.5px;line-height:21.5px;color:#1a1a1a;transform:scaleX(1.1201);transform-origin:0 0;">Keine Antwort</div>
<div class="t" style="left:1911.5px;top:2366.5px;font-size:21.5px;line-height:21.5px;color:#1a1a1a;transform:scaleX(0.9918);transform-origin:0 0;">40084</div>
<div class="t" style="left:2053.0px;top:2366.5px;font-size:21.5px;line-height:21.5px;color:#1a1a1a;">I_AC_Power_SF</div>
<div style="left:91px;top:2396.71px;width:3705px;height:46.529999999999745px;background:#f3c7cd;"></div>
<div style="left:91px;top:2442.4399999999996px;width:3705px;height:2px;background:#d8d8d8;z-index:1;"></div>
<div class="t" style="left:124.1px;top:2412.5px;font-size:21.5px;line-height:21.5px;color:#1a1a1a;">524</div>
<div class="t" style="left:175.6px;top:2412.5px;font-size:21.5px;line-height:21.5px;color:#1a1a1a;transform:scaleX(1.0005);transform-origin:0 0;">15:49:02.110</div>
<div class="t" style="left:334.5px;top:2412.5px;font-size:21.5px;line-height:21.5px;color:#1a1a1a;transform:scaleX(0.9934);transform-origin:0 0;">SolarEdge WR SE25K</div>
<div class="t" style="left:633.0px;top:2412.5px;font-size:21.5px;line-height:21.5px;color:#1a1a1a;">1</div>
<div class="t" style="left:812.4px;top:2412.5px;font-size:21.5px;line-height:21.5px;color:#1a1a1a;transform:scaleX(1.0469);transform-origin:0 0;">Fehler</div>
<div class="t" style="left:1212.5px;top:2412.5px;font-size:21.5px;line-height:21.5px;color:#1a1a1a;transform:scaleX(1.1201);transform-origin:0 0;">Keine Antwort</div>
<div class="t" style="left:1911.5px;top:2412.5px;font-size:21.5px;line-height:21.5px;color:#1a1a1a;transform:scaleX(0.9918);transform-origin:0 0;">40107</div>
<div class="t" style="left:2053.0px;top:2412.5px;font-size:21.5px;line-height:21.5px;color:#1a1a1a;">I_Status</div>
<div style="left:91px;top:2442.74px;width:3705px;height:46.5300000000002px;background:#f3c7cd;"></div>
<div style="left:91px;top:2488.47px;width:3705px;height:2px;background:#d8d8d8;z-index:1;"></div>
<div class="t" style="left:124.1px;top:2458.5px;font-size:21.5px;line-height:21.5px;color:#1a1a1a;">525</div>
<div class="t" style="left:175.6px;top:2458.5px;font-size:21.5px;line-height:21.5px;color:#1a1a1a;transform:scaleX(0.9877);transform-origin:0 0;">15:49:03.097</div>
<div class="t" style="left:334.5px;top:2458.5px;font-size:21.5px;line-height:21.5px;color:#1a1a1a;transform:scaleX(0.9934);transform-origin:0 0;">SolarEdge WR SE25K</div>
<div class="t" style="left:633.0px;top:2458.5px;font-size:21.5px;line-height:21.5px;color:#1a1a1a;">1</div>
<div class="t" style="left:812.4px;top:2458.5px;font-size:21.5px;line-height:21.5px;color:#1a1a1a;transform:scaleX(1.0469);transform-origin:0 0;">Fehler</div>
<div class="t" style="left:1212.5px;top:2458.5px;font-size:21.5px;line-height:21.5px;color:#1a1a1a;transform:scaleX(1.1201);transform-origin:0 0;">Keine Antwort</div>
<div class="t" style="left:1911.5px;top:2458.5px;font-size:21.5px;line-height:21.5px;color:#1a1a1a;transform:scaleX(0.9918);transform-origin:0 0;">40107</div>
<div class="t" style="left:2053.0px;top:2458.5px;font-size:21.5px;line-height:21.5px;color:#1a1a1a;">I_Status</div>
<div style="left:91px;top:2488.77px;width:3705px;height:46.5300000000002px;background:#f3c7cd;"></div>
<div style="left:91px;top:2534.5px;width:3705px;height:2px;background:#d8d8d8;z-index:1;"></div>
<div class="t" style="left:124.1px;top:2504.6px;font-size:21.5px;line-height:21.5px;color:#1a1a1a;">526</div>
<div class="t" style="left:175.6px;top:2504.6px;font-size:21.5px;line-height:21.5px;color:#1a1a1a;transform:scaleX(0.9877);transform-origin:0 0;">15:49:04.235</div>
<div class="t" style="left:334.5px;top:2504.6px;font-size:21.5px;line-height:21.5px;color:#1a1a1a;transform:scaleX(0.9934);transform-origin:0 0;">SolarEdge WR SE15K</div>
<div class="t" style="left:633.0px;top:2504.6px;font-size:21.5px;line-height:21.5px;color:#1a1a1a;">2</div>
<div class="t" style="left:812.4px;top:2504.6px;font-size:21.5px;line-height:21.5px;color:#1a1a1a;transform:scaleX(1.0469);transform-origin:0 0;">Fehler</div>
<div class="t" style="left:1212.5px;top:2504.6px;font-size:21.5px;line-height:21.5px;color:#1a1a1a;transform:scaleX(1.1201);transform-origin:0 0;">Keine Antwort</div>
<div class="t" style="left:1911.5px;top:2504.6px;font-size:21.5px;line-height:21.5px;color:#1a1a1a;transform:scaleX(0.9918);transform-origin:0 0;">40083</div>
<div class="t" style="left:2053.0px;top:2504.6px;font-size:21.5px;line-height:21.5px;color:#1a1a1a;transform:scaleX(0.9993);transform-origin:0 0;">I_AC_Power_RAW</div>
<div style="left:91px;top:2534.8px;width:3705px;height:46.529999999999745px;background:#f3c7cd;"></div>
<div style="left:91px;top:2580.5299999999997px;width:3705px;height:2px;background:#d8d8d8;z-index:1;"></div>
<div class="t" style="left:124.1px;top:2550.6px;font-size:21.5px;line-height:21.5px;color:#1a1a1a;">527</div>
<div class="t" style="left:175.6px;top:2550.6px;font-size:21.5px;line-height:21.5px;color:#1a1a1a;transform:scaleX(0.9877);transform-origin:0 0;">15:49:05.280</div>
<div class="t" style="left:334.5px;top:2550.6px;font-size:21.5px;line-height:21.5px;color:#1a1a1a;transform:scaleX(0.9934);transform-origin:0 0;">SolarEdge WR SE15K</div>
<div class="t" style="left:633.0px;top:2550.6px;font-size:21.5px;line-height:21.5px;color:#1a1a1a;">2</div>
<div class="t" style="left:812.4px;top:2550.6px;font-size:21.5px;line-height:21.5px;color:#1a1a1a;transform:scaleX(1.0469);transform-origin:0 0;">Fehler</div>
<div class="t" style="left:1212.5px;top:2550.6px;font-size:21.5px;line-height:21.5px;color:#1a1a1a;transform:scaleX(1.1201);transform-origin:0 0;">Keine Antwort</div>
<div class="t" style="left:1911.5px;top:2550.6px;font-size:21.5px;line-height:21.5px;color:#1a1a1a;transform:scaleX(0.9918);transform-origin:0 0;">40083</div>
<div class="t" style="left:2053.0px;top:2550.6px;font-size:21.5px;line-height:21.5px;color:#1a1a1a;transform:scaleX(0.9993);transform-origin:0 0;">I_AC_Power_RAW</div>
<div style="left:38px;top:1998px;width:3790px;height:46px;background:#ffffff;"></div>
<svg style="left:50px;top:2006px" width="24" height="24" viewBox="0 0 16 16"><g fill="#111"><rect x="6" y="0" width="4" height="16"/><rect x="6" y="0" width="4" height="16" transform="rotate(60 8 8)"/><rect x="6" y="0" width="4" height="16" transform="rotate(-60 8 8)"/><circle cx="8" cy="8" r="6.3"/></g><circle cx="8" cy="8" r="2.8" fill="#fff"/></svg>
<svg style="left:121px;top:1998px" width="18" height="10" viewBox="0 0 18 10"><path d="M1.5 9 L9 1.5 L16.5 9" stroke="#444" stroke-width="1.6" fill="none"/></svg>
<div class="t" style="left:175.5px;top:2010.9px;font-size:22px;line-height:22px;color:#1a1a1a;transform:scaleX(1.0689);transform-origin:0 0;">Zeit</div>
<div class="t" style="left:336.5px;top:2010.9px;font-size:22px;line-height:22px;color:#1a1a1a;transform:scaleX(1.0178);transform-origin:0 0;">Gerät</div>
<div class="t" style="left:636.6px;top:2010.9px;font-size:22px;line-height:22px;color:#1a1a1a;transform:scaleX(0.9991);transform-origin:0 0;">Geräteadresse</div>
<div class="t" style="left:814.0px;top:2010.9px;font-size:22px;line-height:22px;color:#1a1a1a;transform:scaleX(1.0484);transform-origin:0 0;">Befehl</div>
<div class="t" style="left:1214.0px;top:2010.9px;font-size:22px;line-height:22px;color:#1a1a1a;transform:scaleX(1.0925);transform-origin:0 0;">Wert</div>
<div class="t" style="left:1713.5px;top:2010.9px;font-size:22px;line-height:22px;color:#1a1a1a;transform:scaleX(1.0925);transform-origin:0 0;">Datentyp</div>
<div class="t" style="left:1915.0px;top:2010.9px;font-size:22px;line-height:22px;color:#1a1a1a;transform:scaleX(1.0560);transform-origin:0 0;">IO-Adre...</div>
<div class="t" style="left:2053.0px;top:2010.9px;font-size:22px;line-height:22px;color:#1a1a1a;transform:scaleX(1.1777);transform-origin:0 0;">Input/Output</div>
<div style="left:88px;top:1998px;width:2px;height:46px;background:#dadada;"></div>
<div style="left:166px;top:1998px;width:2px;height:46px;background:#dadada;"></div>
<div style="left:166px;top:2044px;width:2px;height:536px;background:#d6d6d6;"></div>
<div style="left:326px;top:1998px;width:2px;height:46px;background:#dadada;"></div>
<div style="left:326px;top:2044px;width:2px;height:536px;background:#d6d6d6;"></div>
<div style="left:625.5px;top:1998px;width:2px;height:46px;background:#dadada;"></div>
<div style="left:625.5px;top:2044px;width:2px;height:536px;background:#d6d6d6;"></div>
<div style="left:803.4px;top:1998px;width:2px;height:46px;background:#dadada;"></div>
<div style="left:803.4px;top:2044px;width:2px;height:536px;background:#d6d6d6;"></div>
<div style="left:1203.4px;top:1998px;width:2px;height:46px;background:#dadada;"></div>
<div style="left:1203.4px;top:2044px;width:2px;height:536px;background:#d6d6d6;"></div>
<div style="left:1704px;top:1998px;width:2px;height:46px;background:#dadada;"></div>
<div style="left:1704px;top:2044px;width:2px;height:536px;background:#d6d6d6;"></div>
<div style="left:1903.8px;top:1998px;width:2px;height:46px;background:#dadada;"></div>
<div style="left:1903.8px;top:2044px;width:2px;height:536px;background:#d6d6d6;"></div>
<div style="left:2043.7px;top:1998px;width:2px;height:46px;background:#dadada;"></div>
<div style="left:2043.7px;top:2044px;width:2px;height:536px;background:#d6d6d6;"></div>
<div style="left:88px;top:2044px;width:2px;height:556px;background:#e4e4e4;"></div>
<div style="left:3798px;top:2044px;width:30px;height:538px;background:#efefef;"></div>
<div style="left:3796px;top:2044px;width:2px;height:538px;background:#ffffff;"></div>
<div style="left:3812px;top:2512px;width:4px;height:35px;background:#707070;"></div>
<div style="left:38px;top:2581px;width:3790px;height:19px;background:#efefef;"></div>
<div style="left:38px;top:2580px;width:3758px;height:2px;background:#ffffff;"></div>
<div style="left:74px;top:2596px;width:2397px;height:4px;background:#8a8a8a;"></div>
<div class="t" style="left:2913.6px;top:2457.8px;font-size:40px;line-height:40px;color:rgba(150,150,150,0.62);transform:scaleX(0.9998);transform-origin:0 0;">Windows aktivieren</div>
<div class="t" style="left:2913.6px;top:2510.8px;font-size:28px;line-height:28px;color:rgba(150,150,150,0.62);transform:scaleX(1.0025);transform-origin:0 0;">Wechseln Sie zu den Einstellungen, um Windows zu aktivieren.</div>
</body></html>
